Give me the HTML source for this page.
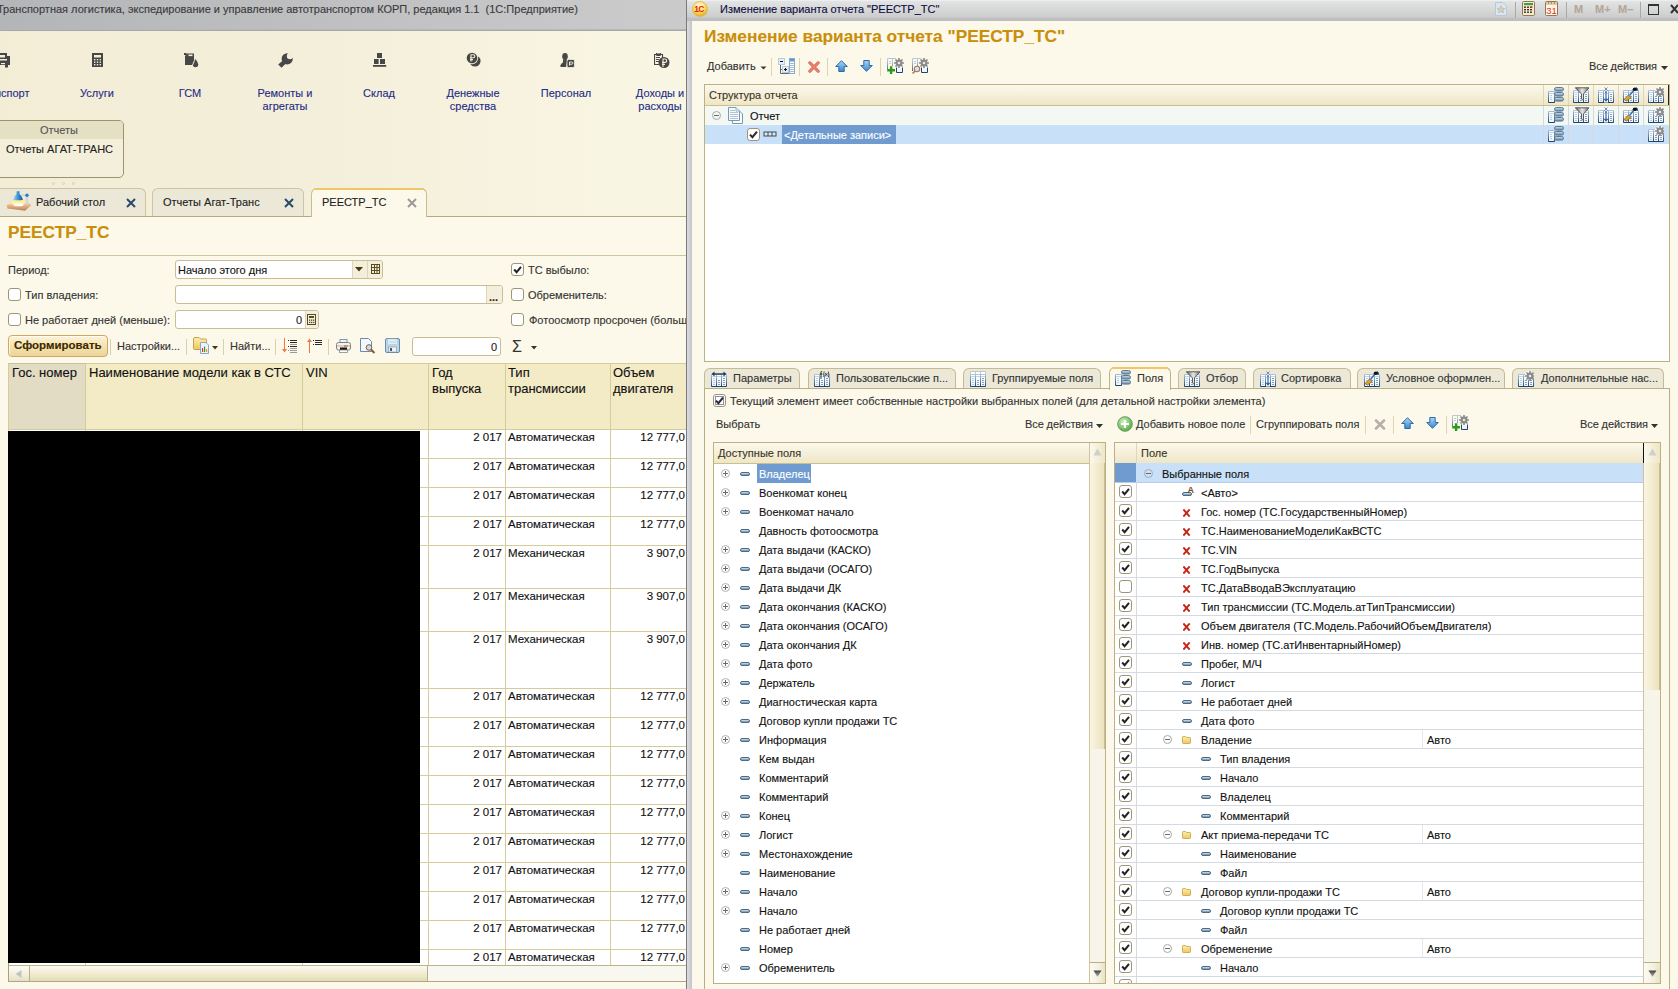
<!DOCTYPE html>
<html><head><meta charset="utf-8"><style>
html,body{margin:0;padding:0}
body{width:1678px;height:989px;position:relative;overflow:hidden;font-family:"Liberation Sans",sans-serif;font-size:11px;background:#fcf9ea}
.a{position:absolute}
.t{position:absolute;white-space:pre;-webkit-text-stroke:0.12px currentColor}
svg{display:block}
</style></head><body>
<svg width="0" height="0" style="position:absolute;left:0;top:0"><defs>
<linearGradient id="gdash" x1="0" y1="0" x2="0" y2="1"><stop offset="0" stop-color="#e4eef6"/><stop offset="0.5" stop-color="#a8c0d4"/><stop offset="1" stop-color="#4e6e8c"/></linearGradient>
<linearGradient id="gfold" x1="0" y1="0" x2="0" y2="1"><stop offset="0" stop-color="#fdf0b0"/><stop offset="1" stop-color="#ecc85c"/></linearGradient>
<linearGradient id="gbar" x1="0" y1="0" x2="0" y2="1"><stop offset="0" stop-color="#d8e6f0"/><stop offset="1" stop-color="#5d7f9d"/></linearGradient>
<linearGradient id="gblue" x1="0" y1="0" x2="0" y2="1"><stop offset="0" stop-color="#a8d8f8"/><stop offset="1" stop-color="#3c86c8"/></linearGradient>
<linearGradient id="gfun" x1="0" y1="0" x2="1" y2="0"><stop offset="0" stop-color="#5a5a5a"/><stop offset="0.5" stop-color="#e8e8e8"/><stop offset="1" stop-color="#707070"/></linearGradient>
<linearGradient id="gredx" x1="0" y1="0" x2="0" y2="1"><stop offset="0" stop-color="#f08070"/><stop offset="1" stop-color="#d04030"/></linearGradient>
<symbol id="dash" viewBox="0 0 10 4"><rect x="0.5" y="0.5" width="9" height="3" rx="1.5" fill="url(#gdash)" stroke="#4a6a86" stroke-width="1"/></symbol>
<symbol id="plusc" viewBox="0 0 10 10"><circle cx="4.5" cy="4.5" r="4" fill="#fff" stroke="#b0b0b0" stroke-width="1"/><path d="M2 4.5H7M4.5 2V7" stroke="#6a6a6a" stroke-width="1"/></symbol>
<symbol id="minusc" viewBox="0 0 10 10"><circle cx="4.5" cy="4.5" r="4" fill="none" stroke="#a8a8a8" stroke-width="1"/><path d="M2 4.5H7" stroke="#6a6a6a" stroke-width="1"/></symbol>
<symbol id="redx" viewBox="0 0 8 8"><path d="M1 1.2L6 6.8M6 1.2L1 6.8" stroke="#c42616" stroke-width="2" stroke-linecap="square"/></symbol>
<symbol id="folder" viewBox="0 0 9 8"><path d="M0.5 1.2Q0.5 0.5 1.2 0.5H3.6L4.4 1.5H7.8Q8.5 1.5 8.5 2.2V6.8Q8.5 7.5 7.8 7.5H1.2Q0.5 7.5 0.5 6.8Z" fill="url(#gfold)" stroke="#d2ac5a" stroke-width="1"/></symbol>
<symbol id="chk" viewBox="0 0 13 13"><rect x="0.5" y="0.5" width="12" height="12" rx="2.5" fill="#fff" stroke="#9d9475"/><path d="M3 6.6L5.4 9.2L10 3.6" stroke="#2a2a2a" stroke-width="2" fill="none"/></symbol>
<symbol id="chk0" viewBox="0 0 13 13"><rect x="0.5" y="0.5" width="12" height="12" rx="2.5" fill="#fff" stroke="#9d9475"/></symbol>
<linearGradient id="ggs" gradientUnits="userSpaceOnUse" x1="0" y1="3" x2="0" y2="16"><stop offset="0" stop-color="#b8c8dc"/><stop offset="0.6" stop-color="#5a7aa0"/><stop offset="1" stop-color="#1e3c64"/></linearGradient>
<linearGradient id="ggf" x1="0" y1="0" x2="0" y2="1"><stop offset="0" stop-color="#ffffff"/><stop offset="1" stop-color="#e4f6fc"/></linearGradient>
<symbol id="grid" viewBox="0 0 16 16">
 <path d="M0.5 15.5V3.5H15.5V15.5ZM5.5 3.5V15.5M10.5 3.5V15.5" fill="url(#ggf)" stroke="url(#ggs)" stroke-width="1"/>
 <path d="M1 5.5H5M6 5.5H10M11 5.5H15" stroke="#c4d4e6" stroke-width="1"/>
 <path d="M2.5 7h1v1h-1zM2.5 9h1v1h-1zM2.5 11h1v1h-1zM2.5 13h1v1h-1zM7 9h2v1H7zM7 11h2v1H7zM7 13h2v1H7zM12 7h2v1h-2zM12 9h2v1h-2zM12 11h2v1h-2zM12 13h2v1h-2z" fill="#9898b8"/>
</symbol>
<symbol id="ifields" viewBox="0 0 16 16">
 <path d="M0.5 15.5V4.5H6.5V15.5Z" fill="url(#ggf)" stroke="url(#ggs)"/><path d="M1 6.5H6" stroke="#c4d4e6"/>
 <path d="M2.5 8h1v1h-1zM2.5 10h1v1h-1zM2.5 12h1v1h-1z" fill="#9898b8"/>
 <rect x="6.5" y="0.5" width="9" height="3.6" rx="1.8" fill="url(#gbar)" stroke="#5a7a94"/>
 <rect x="6.5" y="5.5" width="9" height="3.6" rx="1.8" fill="url(#gbar)" stroke="#5a7a94"/>
 <rect x="6.5" y="10.5" width="9" height="3.6" rx="1.8" fill="url(#gbar)" stroke="#5a7a94"/>
</symbol>
<symbol id="ifilter" viewBox="0 0 16 16"><use href="#grid" width="16" height="16"/><path d="M2.3 0.8H16L10.5 7V13.5L8.5 12V7Z" fill="url(#gfun)" stroke="#505050" stroke-width="0.9" stroke-linejoin="round"/></symbol>
<symbol id="isort" viewBox="0 0 16 16"><use href="#grid" width="16" height="16"/><rect x="6" y="3.5" width="4" height="12" fill="#fff"/><path d="M8 5V13" stroke="#2a66aa" stroke-width="1.2"/><path d="M5.3 11.8L8 14.8L10.7 11.8Z" fill="#2a66aa"/><path d="M6.5 0.5L9.5 3.5M9.5 0.5L6.5 3.5M6.5 3.5L9.5 6.5M9.5 3.5L6.5 6.5" stroke="#4a7ab8" stroke-width="0.8"/></symbol>
<symbol id="ibrush" viewBox="0 0 16 16"><use href="#grid" width="16" height="16"/><path d="M1 12.5L5.5 8L8 10.5L3.5 14Z" fill="#d8a830" stroke="#8a6010" stroke-width="0.8"/><path d="M6.5 8.5L11 3" stroke="#3a78b8" stroke-width="1.6"/><ellipse cx="12" cy="2.3" rx="2.3" ry="1.8" fill="#111"/><path d="M13 0.5Q15.5 1 14.5 4" stroke="#2a6ab0" stroke-width="1" fill="none"/></symbol>
<symbol id="gear" viewBox="0 0 10 10"><g fill="#8a8a8a"><circle cx="5" cy="5" r="3.4"/><path d="M4.2 0h1.6v2h-1.6zM4.2 8h1.6v2h-1.6zM0 4.2h2v1.6h-2zM8 4.2h2v1.6h-2z"/><path d="M4.2 0h1.6v2h-1.6zM4.2 8h1.6v2h-1.6zM0 4.2h2v1.6h-2zM8 4.2h2v1.6h-2z" transform="rotate(45 5 5)"/></g><circle cx="5" cy="5" r="1.3" fill="#e8e8e8"/></symbol>
<symbol id="igear" viewBox="0 0 16 16"><use href="#grid" width="16" height="16"/><circle cx="11.5" cy="4.5" r="4.5" fill="#fff"/><use href="#gear" x="7" y="0" width="10" height="10"/></symbol>
<symbol id="iparams" viewBox="0 0 16 16"><use href="#grid" width="16" height="16"/><path d="M2 3H14" stroke="#1e3a5a" stroke-width="1.4"/><path d="M0.5 3L3.5 0.5V5.5ZM15.5 3L12.5 0.5V5.5Z" fill="#1e3a5a"/></symbol>
<symbol id="ifx" viewBox="0 0 16 16"><use href="#grid" width="16" height="16"/><path d="M7 1Q7 0 8.2 0.3M7 1V8M5.8 3H8.2" stroke="#222" stroke-width="0.9" fill="none"/><path d="M10.2 0.5Q9 3.5 10.2 6.5M14.3 0.5Q15.5 3.5 14.3 6.5" stroke="#333" stroke-width="0.8" fill="none"/><path d="M11 2L13.5 5M13.5 2L11 5" stroke="#333" stroke-width="0.8"/></symbol>
<symbol id="igrp" viewBox="0 0 16 16"><use href="#grid" width="16" height="16"/><path d="M0.5 0.5H15.5V3.5H0.5ZM5.5 0.5V3.5M10.5 0.5V3.5" fill="#fff" stroke="url(#ggs)"/></symbol>
<symbol id="ltri" viewBox="0 0 10 10"><path d="M7 1L2 5L7 9Z" fill="#c4c4c4"/></symbol>
</defs></svg>
<div class="a" style="left:0;top:0;width:686px;height:989px;overflow:hidden">
<div class="a" style="left:0px;top:0px;width:686px;height:29px;background:linear-gradient(90deg,#b4b5b8,#cbcbcc)"></div>
<div class="a" style="left:0px;top:29px;width:686px;height:1px;background:#b8b8ba"></div>
<div class="a" style="left:0px;top:30px;width:686px;height:1px;background:#a8a8aa"></div>
<div class="t" style="left:-3px;top:4px;font-size:11px;line-height:11px;color:#3a3a3a;">Транспортная логистика, экспедирование и управление автотранспортом КОРП, редакция 1.1  (1С:Предприятие)</div>
<div class="a" style="left:0px;top:31px;width:686px;height:185px;background:linear-gradient(90deg,#f3edd6,#f4efda 45%,#f9f6e4)"></div>
<div class="t" style="left:-57px;top:88px;font-size:11px;line-height:11px;color:#1f2c88;width:120px;text-align:center;">Транспорт</div>
<div class="t" style="left:37px;top:88px;font-size:11px;line-height:11px;color:#1f2c88;width:120px;text-align:center;">Услуги</div>
<div class="t" style="left:130px;top:88px;font-size:11px;line-height:11px;color:#1f2c88;width:120px;text-align:center;">ГСМ</div>
<div class="t" style="left:225px;top:88px;font-size:11px;line-height:11px;color:#1f2c88;width:120px;text-align:center;">Ремонты и</div>
<div class="t" style="left:225px;top:101px;font-size:11px;line-height:11px;color:#1f2c88;width:120px;text-align:center;">агрегаты</div>
<div class="t" style="left:319px;top:88px;font-size:11px;line-height:11px;color:#1f2c88;width:120px;text-align:center;">Склад</div>
<div class="t" style="left:413px;top:88px;font-size:11px;line-height:11px;color:#1f2c88;width:120px;text-align:center;">Денежные</div>
<div class="t" style="left:413px;top:101px;font-size:11px;line-height:11px;color:#1f2c88;width:120px;text-align:center;">средства</div>
<div class="t" style="left:506px;top:88px;font-size:11px;line-height:11px;color:#1f2c88;width:120px;text-align:center;">Персонал</div>
<div class="t" style="left:600px;top:88px;font-size:11px;line-height:11px;color:#1f2c88;width:120px;text-align:center;">Доходы и</div>
<div class="t" style="left:600px;top:101px;font-size:11px;line-height:11px;color:#1f2c88;width:120px;text-align:center;">расходы</div>
<div class="a" style="left:-6px;top:120px;width:130px;height:58px;border:1px solid #9c946e;border-radius:5px;background:#f4efda;box-sizing:border-box"></div>
<div class="a" style="left:-5px;top:121px;width:128px;height:18px;background:#e5e0c3;border-radius:0 4px 0 0"></div>
<div class="t" style="left:0px;top:125px;font-size:11px;line-height:11px;color:#555;width:118px;text-align:center;">Отчеты</div>
<div class="t" style="left:6px;top:144px;font-size:11px;line-height:11px;color:#222;">Отчеты АГАТ-ТРАНС</div>
<div class="a" style="left:51.5px;top:181.5px;width:3px;height:3px;border-radius:50%;border:1px solid #d4ceb4;box-sizing:border-box"></div>
<div class="a" style="left:61.5px;top:181.5px;width:3px;height:3px;border-radius:50%;border:1px solid #d4ceb4;box-sizing:border-box"></div>
<div class="a" style="left:71.5px;top:181.5px;width:3px;height:3px;border-radius:50%;border:1px solid #d4ceb4;box-sizing:border-box"></div>
<div class="a" style="left:-6px;top:188px;width:152px;height:28px;background:#ebe8d8;border:1px solid #cdc4a0;border-bottom:none;border-radius:6px 6px 0 0;box-sizing:border-box"></div>
<div class="t" style="left:36px;top:197px;font-size:11px;line-height:11px;color:#222;">Рабочий стол</div>
<div class="a" style="left:152px;top:188px;width:152px;height:28px;background:#ebe8d8;border:1px solid #cdc4a0;border-bottom:none;border-radius:6px 6px 0 0;box-sizing:border-box"></div>
<div class="t" style="left:163px;top:197px;font-size:11px;line-height:11px;color:#222;">Отчеты Агат-Транс</div>
<div class="a" style="left:0px;top:216px;width:686px;height:1px;background:#b4aa80"></div>
<div class="a" style="left:311px;top:188px;width:116px;height:29px;background:#fcf9eb;border:1px solid #c8bd8c;border-bottom:none;border-radius:6px 6px 0 0;box-sizing:border-box"></div>
<div class="a" style="left:314px;top:188px;width:110px;height:2px;background:#f3c46a;border-radius:2px"></div>
<div class="t" style="left:322px;top:197px;font-size:11px;line-height:11px;color:#222;">РЕЕСТР_ТС</div>
<div class="a" style="left:312px;top:216px;width:114px;height:1px;background:#fcf9eb"></div>
<svg class="a" style="left:126px;top:198px;" width="10" height="10" viewBox="0 0 10 10"><path d="M1 1L9 9M9 1L1 9" stroke="#284a6b" stroke-width="2"/></svg>
<svg class="a" style="left:284px;top:198px;" width="10" height="10" viewBox="0 0 10 10"><path d="M1 1L9 9M9 1L1 9" stroke="#284a6b" stroke-width="2"/></svg>
<svg class="a" style="left:407px;top:198px;" width="10" height="10" viewBox="0 0 10 10"><path d="M1 1L9 9M9 1L1 9" stroke="#9a9a9a" stroke-width="2"/></svg>
<div class="a" style="left:0px;top:217px;width:686px;height:772px;background:#fcf9ea"></div>
<div class="t" style="left:8px;top:224px;font-size:17.3px;line-height:17.3px;color:#c98e0a;font-weight:700;">РЕЕСТР_ТС</div>
<div class="a" style="left:8px;top:255px;width:678px;height:1px;background:#cfc69e"></div>
<div class="t" style="left:8px;top:265px;font-size:11px;line-height:11px;color:#333;">Период:</div>
<div class="a" style="left:8px;top:288px;width:13px;height:13px;border:1px solid #9f9677;border-radius:3px;background:#fff;box-sizing:border-box"></div>
<div class="t" style="left:25px;top:290px;font-size:11px;line-height:11px;color:#333;">Тип владения:</div>
<div class="a" style="left:8px;top:313px;width:13px;height:13px;border:1px solid #9f9677;border-radius:3px;background:#fff;box-sizing:border-box"></div>
<div class="t" style="left:25px;top:315px;font-size:11px;line-height:11px;color:#333;">Не работает дней (меньше):</div>
<div class="a" style="left:175px;top:260px;width:208px;height:19px;border:1px solid #c8bd94;border-radius:3px;background:#fff;box-sizing:border-box"></div>
<div class="t" style="left:178px;top:265px;font-size:11px;line-height:11px;color:#111;">Начало этого дня</div>
<div class="a" style="left:352px;top:261px;width:1px;height:17px;background:#ddd5b5"></div>
<div class="a" style="left:353px;top:261px;width:14px;height:17px;background:#f4efdc"></div>
<div class="a" style="left:367px;top:261px;width:1px;height:17px;background:#ddd5b5"></div>
<div class="a" style="left:368px;top:261px;width:14px;height:17px;background:#f4efdc;border-radius:0 2px 2px 0"></div>
<div class="a" style="left:175px;top:285px;width:328px;height:19px;border:1px solid #c8bd94;border-radius:3px;background:#fff;box-sizing:border-box"></div>
<div class="a" style="left:486px;top:286px;width:1px;height:17px;background:#ddd5b5"></div>
<div class="a" style="left:487px;top:286px;width:15px;height:17px;background:#f4efdc;border-radius:0 2px 2px 0"></div>
<div class="t" style="left:489px;top:292px;font-size:11px;line-height:11px;color:#222;font-weight:700;">...</div>
<div class="a" style="left:175px;top:310px;width:144px;height:19px;border:1px solid #c8bd94;border-radius:3px;background:#fff;box-sizing:border-box"></div>
<div class="t" style="left:175px;top:315px;font-size:11px;line-height:11px;color:#222;width:127px;text-align:right;">0</div>
<div class="a" style="left:305px;top:311px;width:1px;height:17px;background:#ddd5b5"></div>
<div class="a" style="left:306px;top:311px;width:12px;height:17px;background:#f4efdc;border-radius:0 2px 2px 0"></div>
<div class="a" style="left:511px;top:263px;width:13px;height:13px;border:1px solid #9f9677;border-radius:3px;background:#fff;box-sizing:border-box"></div>
<svg class="a" style="left:513px;top:265px;" width="9" height="9" viewBox="0 0 9 9"><path d="M1.2 4.5L3.6 7.2L8 1.8" stroke="#222" stroke-width="2" fill="none"/></svg>
<div class="t" style="left:528px;top:265px;font-size:11px;line-height:11px;color:#333;">ТС выбыло:</div>
<div class="a" style="left:511px;top:288px;width:13px;height:13px;border:1px solid #9f9677;border-radius:3px;background:#fff;box-sizing:border-box"></div>
<div class="t" style="left:528px;top:290px;font-size:11px;line-height:11px;color:#333;">Обременитель:</div>
<div class="a" style="left:511px;top:313px;width:13px;height:13px;border:1px solid #9f9677;border-radius:3px;background:#fff;box-sizing:border-box"></div>
<div class="t" style="left:529px;top:315px;font-size:11px;line-height:11px;color:#333;">Фотоосмотр просрочен (больше):</div>
<div class="a" style="left:8px;top:335px;width:100px;height:22px;border:1px solid #d0a860;border-radius:4px;background:linear-gradient(180deg,#fdf3d8,#f6e2b0 50%,#ecd49a);box-shadow:inset 0 1px 0 #fffcf0,inset 1px 0 0 #fff6e0;box-sizing:border-box"></div>
<div class="t" style="left:14px;top:340px;font-size:11.5px;line-height:11.5px;color:#3a2a00;font-weight:700;">Сформировать</div>
<div class="a" style="left:110px;top:339px;width:1px;height:16px;background:#d8d0b0"></div>
<div class="a" style="left:186px;top:339px;width:1px;height:16px;background:#d8d0b0"></div>
<div class="a" style="left:223px;top:339px;width:1px;height:16px;background:#d8d0b0"></div>
<div class="a" style="left:275px;top:339px;width:1px;height:16px;background:#d8d0b0"></div>
<div class="a" style="left:328px;top:339px;width:1px;height:16px;background:#d8d0b0"></div>
<div class="t" style="left:117px;top:341px;font-size:11px;line-height:11px;color:#333;">Настройки...</div>
<div class="t" style="left:230px;top:341px;font-size:11px;line-height:11px;color:#333;">Найти...</div>
<div class="a" style="left:412px;top:337px;width:89px;height:19px;border:1px solid #c8bd94;border-radius:3px;background:#fff;box-sizing:border-box"></div>
<div class="t" style="left:412px;top:342px;font-size:11px;line-height:11px;color:#222;width:85px;text-align:right;">0</div>
<div class="t" style="left:512px;top:339px;font-size:16px;line-height:16px;color:#333;">Σ</div>
<div class="a" style="left:8px;top:363px;width:678px;height:67px;background:#f3ebc6"></div>
<div class="a" style="left:8px;top:363px;width:678px;height:1px;background:#d6cc9a"></div>
<div class="a" style="left:8px;top:429px;width:678px;height:1px;background:#d6cc9a"></div>
<div class="a" style="left:8px;top:363px;width:78px;height:67px;background:#e2dcc5;border:1px solid #c9c0a0;box-sizing:border-box"></div>
<div class="a" style="left:85px;top:363px;width:1px;height:602px;background:#d6cc9a"></div>
<div class="a" style="left:302px;top:363px;width:1px;height:602px;background:#d6cc9a"></div>
<div class="a" style="left:428px;top:363px;width:1px;height:602px;background:#d6cc9a"></div>
<div class="a" style="left:505px;top:363px;width:1px;height:602px;background:#d6cc9a"></div>
<div class="a" style="left:610px;top:363px;width:1px;height:602px;background:#d6cc9a"></div>
<div class="a" style="left:8px;top:363px;width:1px;height:602px;background:#d6cc9a"></div>
<div class="t" style="left:12px;top:366px;font-size:13px;line-height:13px;color:#111;">Гос. номер</div>
<div class="t" style="left:89px;top:366px;font-size:13px;line-height:13px;color:#111;">Наименование модели как в СТС</div>
<div class="t" style="left:306px;top:366px;font-size:13px;line-height:13px;color:#111;">VIN</div>
<div class="t" style="left:432px;top:366px;font-size:13px;line-height:13px;color:#111;">Год</div>
<div class="t" style="left:432px;top:382px;font-size:13px;line-height:13px;color:#111;">выпуска</div>
<div class="t" style="left:508px;top:366px;font-size:13px;line-height:13px;color:#111;">Тип</div>
<div class="t" style="left:508px;top:382px;font-size:13px;line-height:13px;color:#111;">трансмиссии</div>
<div class="t" style="left:613px;top:366px;font-size:13px;line-height:13px;color:#111;">Объем</div>
<div class="t" style="left:613px;top:382px;font-size:13px;line-height:13px;color:#111;">двигателя</div>
<div class="a" style="left:9px;top:430px;width:677px;height:535px;background:#fff"></div>
<div class="a" style="left:85px;top:430px;width:1px;height:535px;background:#d6cc9a"></div>
<div class="a" style="left:302px;top:430px;width:1px;height:535px;background:#d6cc9a"></div>
<div class="a" style="left:428px;top:430px;width:1px;height:535px;background:#d6cc9a"></div>
<div class="a" style="left:505px;top:430px;width:1px;height:535px;background:#d6cc9a"></div>
<div class="a" style="left:610px;top:430px;width:1px;height:535px;background:#d6cc9a"></div>
<div class="a" style="left:8px;top:429px;width:678px;height:1px;background:#d6cc9a"></div>
<div class="t" style="left:428px;top:432px;font-size:11.5px;line-height:11.5px;color:#111;width:74px;text-align:right;">2 017</div>
<div class="t" style="left:508px;top:432px;font-size:11.5px;line-height:11.5px;color:#111;">Автоматическая</div>
<div class="t" style="left:610px;top:432px;font-size:11.5px;line-height:11.5px;color:#111;width:75px;text-align:right;">12 777,0</div>
<div class="a" style="left:8px;top:458px;width:678px;height:1px;background:#d6cc9a"></div>
<div class="t" style="left:428px;top:461px;font-size:11.5px;line-height:11.5px;color:#111;width:74px;text-align:right;">2 017</div>
<div class="t" style="left:508px;top:461px;font-size:11.5px;line-height:11.5px;color:#111;">Автоматическая</div>
<div class="t" style="left:610px;top:461px;font-size:11.5px;line-height:11.5px;color:#111;width:75px;text-align:right;">12 777,0</div>
<div class="a" style="left:8px;top:487px;width:678px;height:1px;background:#d6cc9a"></div>
<div class="t" style="left:428px;top:490px;font-size:11.5px;line-height:11.5px;color:#111;width:74px;text-align:right;">2 017</div>
<div class="t" style="left:508px;top:490px;font-size:11.5px;line-height:11.5px;color:#111;">Автоматическая</div>
<div class="t" style="left:610px;top:490px;font-size:11.5px;line-height:11.5px;color:#111;width:75px;text-align:right;">12 777,0</div>
<div class="a" style="left:8px;top:516px;width:678px;height:1px;background:#d6cc9a"></div>
<div class="t" style="left:428px;top:519px;font-size:11.5px;line-height:11.5px;color:#111;width:74px;text-align:right;">2 017</div>
<div class="t" style="left:508px;top:519px;font-size:11.5px;line-height:11.5px;color:#111;">Автоматическая</div>
<div class="t" style="left:610px;top:519px;font-size:11.5px;line-height:11.5px;color:#111;width:75px;text-align:right;">12 777,0</div>
<div class="a" style="left:8px;top:545px;width:678px;height:1px;background:#d6cc9a"></div>
<div class="t" style="left:428px;top:548px;font-size:11.5px;line-height:11.5px;color:#111;width:74px;text-align:right;">2 017</div>
<div class="t" style="left:508px;top:548px;font-size:11.5px;line-height:11.5px;color:#111;">Механическая</div>
<div class="t" style="left:610px;top:548px;font-size:11.5px;line-height:11.5px;color:#111;width:75px;text-align:right;">3 907,0</div>
<div class="a" style="left:8px;top:588px;width:678px;height:1px;background:#d6cc9a"></div>
<div class="t" style="left:428px;top:591px;font-size:11.5px;line-height:11.5px;color:#111;width:74px;text-align:right;">2 017</div>
<div class="t" style="left:508px;top:591px;font-size:11.5px;line-height:11.5px;color:#111;">Механическая</div>
<div class="t" style="left:610px;top:591px;font-size:11.5px;line-height:11.5px;color:#111;width:75px;text-align:right;">3 907,0</div>
<div class="a" style="left:8px;top:631px;width:678px;height:1px;background:#d6cc9a"></div>
<div class="t" style="left:428px;top:634px;font-size:11.5px;line-height:11.5px;color:#111;width:74px;text-align:right;">2 017</div>
<div class="t" style="left:508px;top:634px;font-size:11.5px;line-height:11.5px;color:#111;">Механическая</div>
<div class="t" style="left:610px;top:634px;font-size:11.5px;line-height:11.5px;color:#111;width:75px;text-align:right;">3 907,0</div>
<div class="a" style="left:8px;top:688px;width:678px;height:1px;background:#d6cc9a"></div>
<div class="t" style="left:428px;top:691px;font-size:11.5px;line-height:11.5px;color:#111;width:74px;text-align:right;">2 017</div>
<div class="t" style="left:508px;top:691px;font-size:11.5px;line-height:11.5px;color:#111;">Автоматическая</div>
<div class="t" style="left:610px;top:691px;font-size:11.5px;line-height:11.5px;color:#111;width:75px;text-align:right;">12 777,0</div>
<div class="a" style="left:8px;top:717px;width:678px;height:1px;background:#d6cc9a"></div>
<div class="t" style="left:428px;top:720px;font-size:11.5px;line-height:11.5px;color:#111;width:74px;text-align:right;">2 017</div>
<div class="t" style="left:508px;top:720px;font-size:11.5px;line-height:11.5px;color:#111;">Автоматическая</div>
<div class="t" style="left:610px;top:720px;font-size:11.5px;line-height:11.5px;color:#111;width:75px;text-align:right;">12 777,0</div>
<div class="a" style="left:8px;top:746px;width:678px;height:1px;background:#d6cc9a"></div>
<div class="t" style="left:428px;top:749px;font-size:11.5px;line-height:11.5px;color:#111;width:74px;text-align:right;">2 017</div>
<div class="t" style="left:508px;top:749px;font-size:11.5px;line-height:11.5px;color:#111;">Автоматическая</div>
<div class="t" style="left:610px;top:749px;font-size:11.5px;line-height:11.5px;color:#111;width:75px;text-align:right;">12 777,0</div>
<div class="a" style="left:8px;top:775px;width:678px;height:1px;background:#d6cc9a"></div>
<div class="t" style="left:428px;top:778px;font-size:11.5px;line-height:11.5px;color:#111;width:74px;text-align:right;">2 017</div>
<div class="t" style="left:508px;top:778px;font-size:11.5px;line-height:11.5px;color:#111;">Автоматическая</div>
<div class="t" style="left:610px;top:778px;font-size:11.5px;line-height:11.5px;color:#111;width:75px;text-align:right;">12 777,0</div>
<div class="a" style="left:8px;top:804px;width:678px;height:1px;background:#d6cc9a"></div>
<div class="t" style="left:428px;top:807px;font-size:11.5px;line-height:11.5px;color:#111;width:74px;text-align:right;">2 017</div>
<div class="t" style="left:508px;top:807px;font-size:11.5px;line-height:11.5px;color:#111;">Автоматическая</div>
<div class="t" style="left:610px;top:807px;font-size:11.5px;line-height:11.5px;color:#111;width:75px;text-align:right;">12 777,0</div>
<div class="a" style="left:8px;top:833px;width:678px;height:1px;background:#d6cc9a"></div>
<div class="t" style="left:428px;top:836px;font-size:11.5px;line-height:11.5px;color:#111;width:74px;text-align:right;">2 017</div>
<div class="t" style="left:508px;top:836px;font-size:11.5px;line-height:11.5px;color:#111;">Автоматическая</div>
<div class="t" style="left:610px;top:836px;font-size:11.5px;line-height:11.5px;color:#111;width:75px;text-align:right;">12 777,0</div>
<div class="a" style="left:8px;top:862px;width:678px;height:1px;background:#d6cc9a"></div>
<div class="t" style="left:428px;top:865px;font-size:11.5px;line-height:11.5px;color:#111;width:74px;text-align:right;">2 017</div>
<div class="t" style="left:508px;top:865px;font-size:11.5px;line-height:11.5px;color:#111;">Автоматическая</div>
<div class="t" style="left:610px;top:865px;font-size:11.5px;line-height:11.5px;color:#111;width:75px;text-align:right;">12 777,0</div>
<div class="a" style="left:8px;top:891px;width:678px;height:1px;background:#d6cc9a"></div>
<div class="t" style="left:428px;top:894px;font-size:11.5px;line-height:11.5px;color:#111;width:74px;text-align:right;">2 017</div>
<div class="t" style="left:508px;top:894px;font-size:11.5px;line-height:11.5px;color:#111;">Автоматическая</div>
<div class="t" style="left:610px;top:894px;font-size:11.5px;line-height:11.5px;color:#111;width:75px;text-align:right;">12 777,0</div>
<div class="a" style="left:8px;top:920px;width:678px;height:1px;background:#d6cc9a"></div>
<div class="t" style="left:428px;top:923px;font-size:11.5px;line-height:11.5px;color:#111;width:74px;text-align:right;">2 017</div>
<div class="t" style="left:508px;top:923px;font-size:11.5px;line-height:11.5px;color:#111;">Автоматическая</div>
<div class="t" style="left:610px;top:923px;font-size:11.5px;line-height:11.5px;color:#111;width:75px;text-align:right;">12 777,0</div>
<div class="a" style="left:8px;top:949px;width:678px;height:1px;background:#d6cc9a"></div>
<div class="t" style="left:428px;top:952px;font-size:11.5px;line-height:11.5px;color:#111;width:74px;text-align:right;">2 017</div>
<div class="t" style="left:508px;top:952px;font-size:11.5px;line-height:11.5px;color:#111;">Автоматическая</div>
<div class="t" style="left:610px;top:952px;font-size:11.5px;line-height:11.5px;color:#111;width:75px;text-align:right;">12 777,0</div>
<div class="a" style="left:8px;top:431px;width:412px;height:532px;background:#000"></div>
<div class="a" style="left:8px;top:966px;width:678px;height:15px;background:#f8f7f0"></div>
<div class="a" style="left:8px;top:981px;width:678px;height:1px;background:#b0a680"></div>
<div class="a" style="left:9px;top:966px;width:20px;height:15px;background:linear-gradient(180deg,#fdfcf6,#f2eedc 60%,#e6e0c4)"></div>
<div class="a" style="left:29px;top:966px;width:1px;height:15px;background:#b8ae88"></div>
<div class="a" style="left:30px;top:966px;width:397px;height:15px;background:linear-gradient(180deg,#fcfaf0,#f0e9cc 60%,#e2dbb8)"></div>
<div class="a" style="left:427px;top:966px;width:1px;height:15px;background:#b8ae88"></div>
<div class="a" style="left:8px;top:965px;width:678px;height:1px;background:#bdb48e"></div>
<div class="a" style="left:8px;top:963px;width:1px;height:19px;background:#aaa07a"></div>
<svg class="a" style="left:14px;top:969px;" width="9" height="10" viewBox="0 0 9 10"><path d="M7.5 1L1.5 5L7.5 9Z" fill="#c4c4c0"/></svg>
</div>
<div class="a" style="left:686px;top:0px;width:1px;height:989px;background:#7a7a7a"></div>
<div class="a" style="left:687px;top:0px;width:5px;height:989px;background:linear-gradient(90deg,#dcdde0,#c4c5c8)"></div>
<div class="a" style="left:687px;top:0px;width:991px;height:21px;background:linear-gradient(180deg,#f2f3f4 0px,#e2e3e3 1.5px,#cdcdcd 17px,#c0c0c2 18.5px,#bcbdbf 21px)"></div>
<div class="a" style="left:692px;top:21px;width:986px;height:968px;background:#fcf9ea"></div>
<div class="t" style="left:720px;top:4px;font-size:11px;line-height:11px;color:#0c0c40;">Изменение варианта отчета &quot;РЕЕСТР_ТС&quot;</div>
<div class="t" style="left:704px;top:28px;font-size:17.3px;line-height:17.3px;color:#c98e0a;font-weight:700;">Изменение варианта отчета &quot;РЕЕСТР_ТС&quot;</div>
<div class="t" style="left:707px;top:61px;font-size:11px;line-height:11px;color:#333;">Добавить</div>
<svg class="a" style="left:760px;top:66px;" width="7" height="4" viewBox="0 0 7 4"><path d="M0.5 0.5H6.5L3.5 3.5Z" fill="#3a3a2a"/></svg>
<div class="a" style="left:771px;top:58px;width:1px;height:18px;background:#ddd4b4"></div>
<div class="a" style="left:799px;top:58px;width:1px;height:18px;background:#ddd4b4"></div>
<div class="a" style="left:827px;top:58px;width:1px;height:18px;background:#ddd4b4"></div>
<div class="a" style="left:880px;top:58px;width:1px;height:18px;background:#ddd4b4"></div>
<div class="t" style="left:1589px;top:61px;font-size:11px;line-height:11px;color:#333;letter-spacing:-0.1px">Все действия</div>
<svg class="a" style="left:1661px;top:66px;" width="7" height="4" viewBox="0 0 7 4"><path d="M0 0H7L3.5 4Z" fill="#333"/></svg>
<div class="a" style="left:704px;top:84px;width:966px;height:278px;border:1px solid #bdb184;background:#fff;box-sizing:border-box"></div>
<div class="a" style="left:705px;top:85px;width:964px;height:20px;background:linear-gradient(180deg,#fbf9ee,#efe6c6)"></div>
<div class="a" style="left:705px;top:105px;width:964px;height:1px;background:#cbbf90"></div>
<div class="t" style="left:709px;top:90px;font-size:11px;line-height:11px;color:#3a3520;">Структура отчета</div>
<div class="a" style="left:705px;top:106px;width:964px;height:19px;background:#f3f8f2"></div>
<div class="a" style="left:705px;top:125px;width:964px;height:19px;background:#c8e0f8"></div>
<div class="a" style="left:1543px;top:85px;width:1px;height:20px;background:#ddd6bb"></div>
<div class="a" style="left:1543px;top:106px;width:1px;height:38px;background:#d3d9e0"></div>
<div class="a" style="left:1568px;top:85px;width:1px;height:20px;background:#ddd6bb"></div>
<div class="a" style="left:1568px;top:106px;width:1px;height:38px;background:#d3d9e0"></div>
<div class="a" style="left:1593px;top:85px;width:1px;height:20px;background:#ddd6bb"></div>
<div class="a" style="left:1593px;top:106px;width:1px;height:38px;background:#d3d9e0"></div>
<div class="a" style="left:1618px;top:85px;width:1px;height:20px;background:#ddd6bb"></div>
<div class="a" style="left:1618px;top:106px;width:1px;height:38px;background:#d3d9e0"></div>
<div class="a" style="left:1643px;top:85px;width:1px;height:20px;background:#ddd6bb"></div>
<div class="a" style="left:1643px;top:106px;width:1px;height:38px;background:#d3d9e0"></div>
<div class="a" style="left:1668px;top:85px;width:1px;height:20px;background:#222"></div>
<div class="t" style="left:750px;top:111px;font-size:11px;line-height:11px;color:#111;">Отчет</div>
<div class="a" style="left:782px;top:125px;width:114px;height:19px;background:#6f9bd1"></div>
<div class="t" style="left:784px;top:130px;font-size:11px;line-height:11px;color:#fff;">&lt;Детальные записи&gt;</div>
<div class="a" style="left:704px;top:388px;width:966px;height:601px;border:1px solid #b9ae84;border-bottom:none;background:#fcf9ea;box-sizing:border-box"></div>
<div class="a" style="left:704px;top:368px;width:96px;height:20px;background:#ebe8d8;border:1px solid #c4ba94;border-bottom:none;border-radius:6px 6px 0 0;box-sizing:border-box"></div>
<div class="t" style="left:733px;top:373px;font-size:11px;line-height:11px;color:#333;">Параметры</div>
<div class="a" style="left:808px;top:368px;width:148px;height:20px;background:#ebe8d8;border:1px solid #c4ba94;border-bottom:none;border-radius:6px 6px 0 0;box-sizing:border-box"></div>
<div class="t" style="left:836px;top:373px;font-size:11px;line-height:11px;color:#333;">Пользовательские п...</div>
<div class="a" style="left:963px;top:368px;width:138px;height:20px;background:#ebe8d8;border:1px solid #c4ba94;border-bottom:none;border-radius:6px 6px 0 0;box-sizing:border-box"></div>
<div class="t" style="left:992px;top:373px;font-size:11px;line-height:11px;color:#333;">Группируемые поля</div>
<div class="a" style="left:1109px;top:367px;width:62px;height:23px;background:#fcf9eb;border:1px solid #bdb286;border-bottom:none;border-radius:6px 6px 0 0;box-sizing:border-box"></div>
<div class="a" style="left:1112px;top:367px;width:56px;height:2px;background:#f3c46a;border-radius:2px"></div>
<div class="t" style="left:1137px;top:373px;font-size:11px;line-height:11px;color:#333;">Поля</div>
<div class="a" style="left:1178px;top:368px;width:68px;height:20px;background:#ebe8d8;border:1px solid #c4ba94;border-bottom:none;border-radius:6px 6px 0 0;box-sizing:border-box"></div>
<div class="t" style="left:1206px;top:373px;font-size:11px;line-height:11px;color:#333;">Отбор</div>
<div class="a" style="left:1253px;top:368px;width:98px;height:20px;background:#ebe8d8;border:1px solid #c4ba94;border-bottom:none;border-radius:6px 6px 0 0;box-sizing:border-box"></div>
<div class="t" style="left:1281px;top:373px;font-size:11px;line-height:11px;color:#333;">Сортировка</div>
<div class="a" style="left:1357px;top:368px;width:148px;height:20px;background:#ebe8d8;border:1px solid #c4ba94;border-bottom:none;border-radius:6px 6px 0 0;box-sizing:border-box"></div>
<div class="t" style="left:1386px;top:373px;font-size:11px;line-height:11px;color:#333;">Условное оформлен...</div>
<div class="a" style="left:1512px;top:368px;width:152px;height:20px;background:#ebe8d8;border:1px solid #c4ba94;border-bottom:none;border-radius:6px 6px 0 0;box-sizing:border-box"></div>
<div class="t" style="left:1541px;top:373px;font-size:11px;line-height:11px;color:#333;">Дополнительные нас...</div>
<svg class="a" style="left:713px;top:394px;" width="13" height="13" viewBox="0 0 13 13"><rect x="0.5" y="0.5" width="12" height="12" rx="2.5" fill="#fff" stroke="#9d9475"/><rect x="2.5" y="2.5" width="8" height="8" fill="none" stroke="#1a1a60" stroke-width="1" stroke-dasharray="1 1"/><path d="M3 6.6L5.4 9.2L10 3.6" stroke="#2a2a2a" stroke-width="2" fill="none"/></svg>
<div class="t" style="left:730px;top:396px;font-size:11px;line-height:11px;color:#333;">Текущий элемент имеет собственные настройки выбранных полей (для детальной настройки элемента)</div>
<div class="t" style="left:716px;top:419px;font-size:11px;line-height:11px;color:#333;">Выбрать</div>
<div class="t" style="left:1025px;top:419px;font-size:11px;line-height:11px;color:#333;letter-spacing:-0.1px">Все действия</div>
<svg class="a" style="left:1096px;top:424px;" width="7" height="4" viewBox="0 0 7 4"><path d="M0 0H7L3.5 4Z" fill="#333"/></svg>
<div class="t" style="left:1136px;top:419px;font-size:11px;line-height:11px;color:#333;">Добавить новое поле</div>
<div class="a" style="left:1250px;top:416px;width:1px;height:18px;background:#ddd4b4"></div>
<div class="a" style="left:1365px;top:416px;width:1px;height:18px;background:#ddd4b4"></div>
<div class="a" style="left:1393px;top:416px;width:1px;height:18px;background:#ddd4b4"></div>
<div class="a" style="left:1446px;top:416px;width:1px;height:18px;background:#ddd4b4"></div>
<div class="t" style="left:1256px;top:419px;font-size:11px;line-height:11px;color:#333;">Сгруппировать поля</div>
<div class="t" style="left:1580px;top:419px;font-size:11px;line-height:11px;color:#333;letter-spacing:-0.1px">Все действия</div>
<svg class="a" style="left:1651px;top:424px;" width="7" height="4" viewBox="0 0 7 4"><path d="M0 0H7L3.5 4Z" fill="#333"/></svg>
<div class="a" style="left:713px;top:442px;width:393px;height:542px;border:1px solid #bdb184;background:#fff;box-sizing:border-box"></div>
<div class="a" style="left:714px;top:443px;width:376px;height:20px;background:linear-gradient(180deg,#fbf9ee,#efe6c6)"></div>
<div class="a" style="left:714px;top:463px;width:376px;height:1px;background:#cbbf90"></div>
<div class="t" style="left:718px;top:448px;font-size:11px;line-height:11px;color:#3a3520;">Доступные поля</div>
<div class="a" style="left:1089px;top:443px;width:1px;height:540px;background:#cfc49a"></div>
<div class="a" style="left:1090px;top:443px;width:15px;height:20px;background:linear-gradient(90deg,#fbf9ee,#efe6c6)"></div>
<div class="a" style="left:1090px;top:463px;width:15px;height:286px;background:linear-gradient(90deg,#faf6e6,#ede2bc);border-right:1px solid #c8bd94;box-sizing:border-box"></div>
<div class="a" style="left:1090px;top:749px;width:15px;height:234px;background:#f7f4ea"></div>
<div class="a" style="left:757px;top:464px;width:54px;height:19px;background:#6f9bd1"></div>
<div class="t" style="left:759px;top:469px;font-size:11px;line-height:11px;color:#fff;">Владелец</div>
<div class="t" style="left:759px;top:488px;font-size:11px;line-height:11px;color:#111;">Военкомат конец</div>
<div class="t" style="left:759px;top:507px;font-size:11px;line-height:11px;color:#111;">Военкомат начало</div>
<div class="t" style="left:759px;top:526px;font-size:11px;line-height:11px;color:#111;">Давность фотоосмотра</div>
<div class="t" style="left:759px;top:545px;font-size:11px;line-height:11px;color:#111;">Дата выдачи (КАСКО)</div>
<div class="t" style="left:759px;top:564px;font-size:11px;line-height:11px;color:#111;">Дата выдачи (ОСАГО)</div>
<div class="t" style="left:759px;top:583px;font-size:11px;line-height:11px;color:#111;">Дата выдачи ДК</div>
<div class="t" style="left:759px;top:602px;font-size:11px;line-height:11px;color:#111;">Дата окончания (КАСКО)</div>
<div class="t" style="left:759px;top:621px;font-size:11px;line-height:11px;color:#111;">Дата окончания (ОСАГО)</div>
<div class="t" style="left:759px;top:640px;font-size:11px;line-height:11px;color:#111;">Дата окончания ДК</div>
<div class="t" style="left:759px;top:659px;font-size:11px;line-height:11px;color:#111;">Дата фото</div>
<div class="t" style="left:759px;top:678px;font-size:11px;line-height:11px;color:#111;">Держатель</div>
<div class="t" style="left:759px;top:697px;font-size:11px;line-height:11px;color:#111;">Диагностическая карта</div>
<div class="t" style="left:759px;top:716px;font-size:11px;line-height:11px;color:#111;">Договор купли продажи ТС</div>
<div class="t" style="left:759px;top:735px;font-size:11px;line-height:11px;color:#111;">Информация</div>
<div class="t" style="left:759px;top:754px;font-size:11px;line-height:11px;color:#111;">Кем выдан</div>
<div class="t" style="left:759px;top:773px;font-size:11px;line-height:11px;color:#111;">Комментарий</div>
<div class="t" style="left:759px;top:792px;font-size:11px;line-height:11px;color:#111;">Комментарий</div>
<div class="t" style="left:759px;top:811px;font-size:11px;line-height:11px;color:#111;">Конец</div>
<div class="t" style="left:759px;top:830px;font-size:11px;line-height:11px;color:#111;">Логист</div>
<div class="t" style="left:759px;top:849px;font-size:11px;line-height:11px;color:#111;">Местонахождение</div>
<div class="t" style="left:759px;top:868px;font-size:11px;line-height:11px;color:#111;">Наименование</div>
<div class="t" style="left:759px;top:887px;font-size:11px;line-height:11px;color:#111;">Начало</div>
<div class="t" style="left:759px;top:906px;font-size:11px;line-height:11px;color:#111;">Начало</div>
<div class="t" style="left:759px;top:925px;font-size:11px;line-height:11px;color:#111;">Не работает дней</div>
<div class="t" style="left:759px;top:944px;font-size:11px;line-height:11px;color:#111;">Номер</div>
<div class="t" style="left:759px;top:963px;font-size:11px;line-height:11px;color:#111;">Обременитель</div>
<div class="a" style="left:1114px;top:442px;width:547px;height:542px;border:1px solid #bdb184;background:#fff;box-sizing:border-box"></div>
<div class="a" style="left:1115px;top:443px;width:529px;height:20px;background:linear-gradient(180deg,#fbf9ee,#efe6c6)"></div>
<div class="a" style="left:1115px;top:463px;width:529px;height:1px;background:#cbbf90"></div>
<div class="a" style="left:1136px;top:443px;width:1px;height:20px;background:#ddd6bb"></div>
<div class="a" style="left:1643px;top:443px;width:1px;height:20px;background:#111"></div>
<div class="t" style="left:1141px;top:448px;font-size:11px;line-height:11px;color:#3a3520;">Поле</div>
<div class="a" style="left:1644px;top:443px;width:16px;height:20px;background:linear-gradient(90deg,#fbf9ee,#efe6c6)"></div>
<div class="a" style="left:1644px;top:463px;width:16px;height:227px;background:linear-gradient(90deg,#faf6e6,#ede2bc);border-right:1px solid #c8bd94;box-sizing:border-box"></div>
<div class="a" style="left:1644px;top:690px;width:16px;height:293px;background:#f7f4ea"></div>
<div class="a" style="left:1643px;top:463px;width:1px;height:520px;background:#cfc49a"></div>
<div class="a" style="left:1115px;top:463px;width:528px;height:19px;background:#c8e0f8"></div>
<div class="a" style="left:1115px;top:463px;width:21px;height:19px;background:#6f9bd1"></div>
<div class="a" style="left:1115px;top:464px;width:528px;height:519px;overflow:hidden">
<div class="a" style="left:0px;top:18px;width:528px;height:1px;background:#d3dae2"></div>
<div class="a" style="left:0px;top:18px;width:528px;height:1px;background:#b5cde6"></div>
<div class="a" style="left:0px;top:37px;width:528px;height:1px;background:#d3dae2"></div>
<div class="a" style="left:0px;top:56px;width:528px;height:1px;background:#d3dae2"></div>
<div class="a" style="left:0px;top:75px;width:528px;height:1px;background:#d3dae2"></div>
<div class="a" style="left:0px;top:94px;width:528px;height:1px;background:#d3dae2"></div>
<div class="a" style="left:0px;top:113px;width:528px;height:1px;background:#d3dae2"></div>
<div class="a" style="left:0px;top:132px;width:528px;height:1px;background:#d3dae2"></div>
<div class="a" style="left:0px;top:151px;width:528px;height:1px;background:#d3dae2"></div>
<div class="a" style="left:0px;top:170px;width:528px;height:1px;background:#d3dae2"></div>
<div class="a" style="left:0px;top:189px;width:528px;height:1px;background:#d3dae2"></div>
<div class="a" style="left:0px;top:208px;width:528px;height:1px;background:#d3dae2"></div>
<div class="a" style="left:0px;top:227px;width:528px;height:1px;background:#d3dae2"></div>
<div class="a" style="left:0px;top:246px;width:528px;height:1px;background:#d3dae2"></div>
<div class="a" style="left:0px;top:265px;width:528px;height:1px;background:#d3dae2"></div>
<div class="a" style="left:0px;top:284px;width:528px;height:1px;background:#d3dae2"></div>
<div class="a" style="left:0px;top:303px;width:528px;height:1px;background:#d3dae2"></div>
<div class="a" style="left:0px;top:322px;width:528px;height:1px;background:#d3dae2"></div>
<div class="a" style="left:0px;top:341px;width:528px;height:1px;background:#d3dae2"></div>
<div class="a" style="left:0px;top:360px;width:528px;height:1px;background:#d3dae2"></div>
<div class="a" style="left:0px;top:379px;width:528px;height:1px;background:#d3dae2"></div>
<div class="a" style="left:0px;top:398px;width:528px;height:1px;background:#d3dae2"></div>
<div class="a" style="left:0px;top:417px;width:528px;height:1px;background:#d3dae2"></div>
<div class="a" style="left:0px;top:436px;width:528px;height:1px;background:#d3dae2"></div>
<div class="a" style="left:0px;top:455px;width:528px;height:1px;background:#d3dae2"></div>
<div class="a" style="left:0px;top:474px;width:528px;height:1px;background:#d3dae2"></div>
<div class="a" style="left:0px;top:493px;width:528px;height:1px;background:#d3dae2"></div>
<div class="a" style="left:0px;top:512px;width:528px;height:1px;background:#d3dae2"></div>
</div>
<div class="a" style="left:1115px;top:463px;width:528px;height:520px;overflow:hidden">
<div class="t" style="left:47px;top:6px;font-size:11px;line-height:11px;color:#111;">Выбранные поля</div>
<div class="a" style="left:21px;top:19px;width:1px;height:19px;background:#d3dae2"></div>
<div class="a" style="left:4px;top:22px;width:13px;height:13px;border:1px solid #9f9677;border-radius:3px;background:#fff;box-sizing:border-box"></div>
<svg class="a" style="left:6px;top:24px;" width="9" height="9" viewBox="0 0 9 9"><path d="M1.2 4.5L3.6 7.2L8 1.8" stroke="#222" stroke-width="2" fill="none"/></svg>
<div class="t" style="left:86px;top:25px;font-size:11px;line-height:11px;color:#111;">&lt;Авто&gt;</div>
<div class="a" style="left:21px;top:38px;width:1px;height:19px;background:#d3dae2"></div>
<div class="a" style="left:4px;top:41px;width:13px;height:13px;border:1px solid #9f9677;border-radius:3px;background:#fff;box-sizing:border-box"></div>
<svg class="a" style="left:6px;top:43px;" width="9" height="9" viewBox="0 0 9 9"><path d="M1.2 4.5L3.6 7.2L8 1.8" stroke="#222" stroke-width="2" fill="none"/></svg>
<div class="t" style="left:86px;top:44px;font-size:11px;line-height:11px;color:#111;">Гос. номер (ТС.ГосударственныйНомер)</div>
<div class="a" style="left:21px;top:57px;width:1px;height:19px;background:#d3dae2"></div>
<div class="a" style="left:4px;top:60px;width:13px;height:13px;border:1px solid #9f9677;border-radius:3px;background:#fff;box-sizing:border-box"></div>
<svg class="a" style="left:6px;top:62px;" width="9" height="9" viewBox="0 0 9 9"><path d="M1.2 4.5L3.6 7.2L8 1.8" stroke="#222" stroke-width="2" fill="none"/></svg>
<div class="t" style="left:86px;top:63px;font-size:11px;line-height:11px;color:#111;">ТС.НаименованиеМоделиКакВСТС</div>
<div class="a" style="left:21px;top:76px;width:1px;height:19px;background:#d3dae2"></div>
<div class="a" style="left:4px;top:79px;width:13px;height:13px;border:1px solid #9f9677;border-radius:3px;background:#fff;box-sizing:border-box"></div>
<svg class="a" style="left:6px;top:81px;" width="9" height="9" viewBox="0 0 9 9"><path d="M1.2 4.5L3.6 7.2L8 1.8" stroke="#222" stroke-width="2" fill="none"/></svg>
<div class="t" style="left:86px;top:82px;font-size:11px;line-height:11px;color:#111;">ТС.VIN</div>
<div class="a" style="left:21px;top:95px;width:1px;height:19px;background:#d3dae2"></div>
<div class="a" style="left:4px;top:98px;width:13px;height:13px;border:1px solid #9f9677;border-radius:3px;background:#fff;box-sizing:border-box"></div>
<svg class="a" style="left:6px;top:100px;" width="9" height="9" viewBox="0 0 9 9"><path d="M1.2 4.5L3.6 7.2L8 1.8" stroke="#222" stroke-width="2" fill="none"/></svg>
<div class="t" style="left:86px;top:101px;font-size:11px;line-height:11px;color:#111;">ТС.ГодВыпуска</div>
<div class="a" style="left:21px;top:114px;width:1px;height:19px;background:#d3dae2"></div>
<div class="a" style="left:4px;top:117px;width:13px;height:13px;border:1px solid #9f9677;border-radius:3px;background:#fff;box-sizing:border-box"></div>
<div class="t" style="left:86px;top:120px;font-size:11px;line-height:11px;color:#111;">ТС.ДатаВводаВЭксплуатацию</div>
<div class="a" style="left:21px;top:133px;width:1px;height:19px;background:#d3dae2"></div>
<div class="a" style="left:4px;top:136px;width:13px;height:13px;border:1px solid #9f9677;border-radius:3px;background:#fff;box-sizing:border-box"></div>
<svg class="a" style="left:6px;top:138px;" width="9" height="9" viewBox="0 0 9 9"><path d="M1.2 4.5L3.6 7.2L8 1.8" stroke="#222" stroke-width="2" fill="none"/></svg>
<div class="t" style="left:86px;top:139px;font-size:11px;line-height:11px;color:#111;">Тип трансмиссии (ТС.Модель.атТипТрансмиссии)</div>
<div class="a" style="left:21px;top:152px;width:1px;height:19px;background:#d3dae2"></div>
<div class="a" style="left:4px;top:155px;width:13px;height:13px;border:1px solid #9f9677;border-radius:3px;background:#fff;box-sizing:border-box"></div>
<svg class="a" style="left:6px;top:157px;" width="9" height="9" viewBox="0 0 9 9"><path d="M1.2 4.5L3.6 7.2L8 1.8" stroke="#222" stroke-width="2" fill="none"/></svg>
<div class="t" style="left:86px;top:158px;font-size:11px;line-height:11px;color:#111;">Объем двигателя (ТС.Модель.РабочийОбъемДвигателя)</div>
<div class="a" style="left:21px;top:171px;width:1px;height:19px;background:#d3dae2"></div>
<div class="a" style="left:4px;top:174px;width:13px;height:13px;border:1px solid #9f9677;border-radius:3px;background:#fff;box-sizing:border-box"></div>
<svg class="a" style="left:6px;top:176px;" width="9" height="9" viewBox="0 0 9 9"><path d="M1.2 4.5L3.6 7.2L8 1.8" stroke="#222" stroke-width="2" fill="none"/></svg>
<div class="t" style="left:86px;top:177px;font-size:11px;line-height:11px;color:#111;">Инв. номер (ТС.атИнвентарныйНомер)</div>
<div class="a" style="left:21px;top:190px;width:1px;height:19px;background:#d3dae2"></div>
<div class="a" style="left:4px;top:193px;width:13px;height:13px;border:1px solid #9f9677;border-radius:3px;background:#fff;box-sizing:border-box"></div>
<svg class="a" style="left:6px;top:195px;" width="9" height="9" viewBox="0 0 9 9"><path d="M1.2 4.5L3.6 7.2L8 1.8" stroke="#222" stroke-width="2" fill="none"/></svg>
<div class="t" style="left:86px;top:196px;font-size:11px;line-height:11px;color:#111;">Пробег, М/Ч</div>
<div class="a" style="left:21px;top:209px;width:1px;height:19px;background:#d3dae2"></div>
<div class="a" style="left:4px;top:212px;width:13px;height:13px;border:1px solid #9f9677;border-radius:3px;background:#fff;box-sizing:border-box"></div>
<svg class="a" style="left:6px;top:214px;" width="9" height="9" viewBox="0 0 9 9"><path d="M1.2 4.5L3.6 7.2L8 1.8" stroke="#222" stroke-width="2" fill="none"/></svg>
<div class="t" style="left:86px;top:215px;font-size:11px;line-height:11px;color:#111;">Логист</div>
<div class="a" style="left:21px;top:228px;width:1px;height:19px;background:#d3dae2"></div>
<div class="a" style="left:4px;top:231px;width:13px;height:13px;border:1px solid #9f9677;border-radius:3px;background:#fff;box-sizing:border-box"></div>
<svg class="a" style="left:6px;top:233px;" width="9" height="9" viewBox="0 0 9 9"><path d="M1.2 4.5L3.6 7.2L8 1.8" stroke="#222" stroke-width="2" fill="none"/></svg>
<div class="t" style="left:86px;top:234px;font-size:11px;line-height:11px;color:#111;">Не работает дней</div>
<div class="a" style="left:21px;top:247px;width:1px;height:19px;background:#d3dae2"></div>
<div class="a" style="left:4px;top:250px;width:13px;height:13px;border:1px solid #9f9677;border-radius:3px;background:#fff;box-sizing:border-box"></div>
<svg class="a" style="left:6px;top:252px;" width="9" height="9" viewBox="0 0 9 9"><path d="M1.2 4.5L3.6 7.2L8 1.8" stroke="#222" stroke-width="2" fill="none"/></svg>
<div class="t" style="left:86px;top:253px;font-size:11px;line-height:11px;color:#111;">Дата фото</div>
<div class="a" style="left:21px;top:266px;width:1px;height:19px;background:#d3dae2"></div>
<div class="a" style="left:4px;top:269px;width:13px;height:13px;border:1px solid #9f9677;border-radius:3px;background:#fff;box-sizing:border-box"></div>
<svg class="a" style="left:6px;top:271px;" width="9" height="9" viewBox="0 0 9 9"><path d="M1.2 4.5L3.6 7.2L8 1.8" stroke="#222" stroke-width="2" fill="none"/></svg>
<div class="t" style="left:86px;top:272px;font-size:11px;line-height:11px;color:#111;">Владение</div>
<div class="a" style="left:307px;top:267px;width:1px;height:18px;background:#e3e7ec"></div>
<div class="t" style="left:312px;top:272px;font-size:11px;line-height:11px;color:#111;">Авто</div>
<div class="a" style="left:21px;top:285px;width:1px;height:19px;background:#d3dae2"></div>
<div class="a" style="left:4px;top:288px;width:13px;height:13px;border:1px solid #9f9677;border-radius:3px;background:#fff;box-sizing:border-box"></div>
<svg class="a" style="left:6px;top:290px;" width="9" height="9" viewBox="0 0 9 9"><path d="M1.2 4.5L3.6 7.2L8 1.8" stroke="#222" stroke-width="2" fill="none"/></svg>
<div class="t" style="left:105px;top:291px;font-size:11px;line-height:11px;color:#111;">Тип владения</div>
<div class="a" style="left:21px;top:304px;width:1px;height:19px;background:#d3dae2"></div>
<div class="a" style="left:4px;top:307px;width:13px;height:13px;border:1px solid #9f9677;border-radius:3px;background:#fff;box-sizing:border-box"></div>
<svg class="a" style="left:6px;top:309px;" width="9" height="9" viewBox="0 0 9 9"><path d="M1.2 4.5L3.6 7.2L8 1.8" stroke="#222" stroke-width="2" fill="none"/></svg>
<div class="t" style="left:105px;top:310px;font-size:11px;line-height:11px;color:#111;">Начало</div>
<div class="a" style="left:21px;top:323px;width:1px;height:19px;background:#d3dae2"></div>
<div class="a" style="left:4px;top:326px;width:13px;height:13px;border:1px solid #9f9677;border-radius:3px;background:#fff;box-sizing:border-box"></div>
<svg class="a" style="left:6px;top:328px;" width="9" height="9" viewBox="0 0 9 9"><path d="M1.2 4.5L3.6 7.2L8 1.8" stroke="#222" stroke-width="2" fill="none"/></svg>
<div class="t" style="left:105px;top:329px;font-size:11px;line-height:11px;color:#111;">Владелец</div>
<div class="a" style="left:21px;top:342px;width:1px;height:19px;background:#d3dae2"></div>
<div class="a" style="left:4px;top:345px;width:13px;height:13px;border:1px solid #9f9677;border-radius:3px;background:#fff;box-sizing:border-box"></div>
<svg class="a" style="left:6px;top:347px;" width="9" height="9" viewBox="0 0 9 9"><path d="M1.2 4.5L3.6 7.2L8 1.8" stroke="#222" stroke-width="2" fill="none"/></svg>
<div class="t" style="left:105px;top:348px;font-size:11px;line-height:11px;color:#111;">Комментарий</div>
<div class="a" style="left:21px;top:361px;width:1px;height:19px;background:#d3dae2"></div>
<div class="a" style="left:4px;top:364px;width:13px;height:13px;border:1px solid #9f9677;border-radius:3px;background:#fff;box-sizing:border-box"></div>
<svg class="a" style="left:6px;top:366px;" width="9" height="9" viewBox="0 0 9 9"><path d="M1.2 4.5L3.6 7.2L8 1.8" stroke="#222" stroke-width="2" fill="none"/></svg>
<div class="t" style="left:86px;top:367px;font-size:11px;line-height:11px;color:#111;">Акт приема-передачи ТС</div>
<div class="a" style="left:307px;top:362px;width:1px;height:18px;background:#e3e7ec"></div>
<div class="t" style="left:312px;top:367px;font-size:11px;line-height:11px;color:#111;">Авто</div>
<div class="a" style="left:21px;top:380px;width:1px;height:19px;background:#d3dae2"></div>
<div class="a" style="left:4px;top:383px;width:13px;height:13px;border:1px solid #9f9677;border-radius:3px;background:#fff;box-sizing:border-box"></div>
<svg class="a" style="left:6px;top:385px;" width="9" height="9" viewBox="0 0 9 9"><path d="M1.2 4.5L3.6 7.2L8 1.8" stroke="#222" stroke-width="2" fill="none"/></svg>
<div class="t" style="left:105px;top:386px;font-size:11px;line-height:11px;color:#111;">Наименование</div>
<div class="a" style="left:21px;top:399px;width:1px;height:19px;background:#d3dae2"></div>
<div class="a" style="left:4px;top:402px;width:13px;height:13px;border:1px solid #9f9677;border-radius:3px;background:#fff;box-sizing:border-box"></div>
<svg class="a" style="left:6px;top:404px;" width="9" height="9" viewBox="0 0 9 9"><path d="M1.2 4.5L3.6 7.2L8 1.8" stroke="#222" stroke-width="2" fill="none"/></svg>
<div class="t" style="left:105px;top:405px;font-size:11px;line-height:11px;color:#111;">Файл</div>
<div class="a" style="left:21px;top:418px;width:1px;height:19px;background:#d3dae2"></div>
<div class="a" style="left:4px;top:421px;width:13px;height:13px;border:1px solid #9f9677;border-radius:3px;background:#fff;box-sizing:border-box"></div>
<svg class="a" style="left:6px;top:423px;" width="9" height="9" viewBox="0 0 9 9"><path d="M1.2 4.5L3.6 7.2L8 1.8" stroke="#222" stroke-width="2" fill="none"/></svg>
<div class="t" style="left:86px;top:424px;font-size:11px;line-height:11px;color:#111;">Договор купли-продажи ТС</div>
<div class="a" style="left:307px;top:419px;width:1px;height:18px;background:#e3e7ec"></div>
<div class="t" style="left:312px;top:424px;font-size:11px;line-height:11px;color:#111;">Авто</div>
<div class="a" style="left:21px;top:437px;width:1px;height:19px;background:#d3dae2"></div>
<div class="a" style="left:4px;top:440px;width:13px;height:13px;border:1px solid #9f9677;border-radius:3px;background:#fff;box-sizing:border-box"></div>
<svg class="a" style="left:6px;top:442px;" width="9" height="9" viewBox="0 0 9 9"><path d="M1.2 4.5L3.6 7.2L8 1.8" stroke="#222" stroke-width="2" fill="none"/></svg>
<div class="t" style="left:105px;top:443px;font-size:11px;line-height:11px;color:#111;">Договор купли продажи ТС</div>
<div class="a" style="left:21px;top:456px;width:1px;height:19px;background:#d3dae2"></div>
<div class="a" style="left:4px;top:459px;width:13px;height:13px;border:1px solid #9f9677;border-radius:3px;background:#fff;box-sizing:border-box"></div>
<svg class="a" style="left:6px;top:461px;" width="9" height="9" viewBox="0 0 9 9"><path d="M1.2 4.5L3.6 7.2L8 1.8" stroke="#222" stroke-width="2" fill="none"/></svg>
<div class="t" style="left:105px;top:462px;font-size:11px;line-height:11px;color:#111;">Файл</div>
<div class="a" style="left:21px;top:475px;width:1px;height:19px;background:#d3dae2"></div>
<div class="a" style="left:4px;top:478px;width:13px;height:13px;border:1px solid #9f9677;border-radius:3px;background:#fff;box-sizing:border-box"></div>
<svg class="a" style="left:6px;top:480px;" width="9" height="9" viewBox="0 0 9 9"><path d="M1.2 4.5L3.6 7.2L8 1.8" stroke="#222" stroke-width="2" fill="none"/></svg>
<div class="t" style="left:86px;top:481px;font-size:11px;line-height:11px;color:#111;">Обременение</div>
<div class="a" style="left:307px;top:476px;width:1px;height:18px;background:#e3e7ec"></div>
<div class="t" style="left:312px;top:481px;font-size:11px;line-height:11px;color:#111;">Авто</div>
<div class="a" style="left:21px;top:494px;width:1px;height:19px;background:#d3dae2"></div>
<div class="a" style="left:4px;top:497px;width:13px;height:13px;border:1px solid #9f9677;border-radius:3px;background:#fff;box-sizing:border-box"></div>
<svg class="a" style="left:6px;top:499px;" width="9" height="9" viewBox="0 0 9 9"><path d="M1.2 4.5L3.6 7.2L8 1.8" stroke="#222" stroke-width="2" fill="none"/></svg>
<div class="t" style="left:105px;top:500px;font-size:11px;line-height:11px;color:#111;">Начало</div>
<div class="a" style="left:21px;top:513px;width:1px;height:19px;background:#d3dae2"></div>
<div class="a" style="left:4px;top:516px;width:13px;height:13px;border:1px solid #9f9677;border-radius:3px;background:#fff;box-sizing:border-box"></div>
<svg class="a" style="left:6px;top:518px;" width="9" height="9" viewBox="0 0 9 9"><path d="M1.2 4.5L3.6 7.2L8 1.8" stroke="#222" stroke-width="2" fill="none"/></svg>
<div class="t" style="left:105px;top:519px;font-size:11px;line-height:11px;color:#111;">Комментарий</div>
</div>
<svg class="a" style="left:692px;top:1px;" width="16" height="16" viewBox="0 0 16 16"><defs><radialGradient id="g1c" cx="0.45" cy="0.3" r="0.75"><stop offset="0" stop-color="#fffce8"/><stop offset="0.55" stop-color="#f8dc60"/><stop offset="1" stop-color="#dca018"/></radialGradient></defs><circle cx="8" cy="8" r="7.5" fill="url(#g1c)" stroke="#e8b838" stroke-width="0.8"/><text x="2.2" y="11.2" font-family="Liberation Sans" font-weight="bold" font-size="8.5" fill="#e42414" letter-spacing="-0.6">1С</text></svg>
<svg class="a" style="left:1495px;top:2px;" width="12" height="14" viewBox="0 0 12 14"><path d="M0.5 0.5H8L11.5 4V13.5H0.5Z" fill="#dde6ee" stroke="#b8c8d8"/><path d="M6 3.5L7.2 6.2L10 6.4L7.9 8.2L8.6 11L6 9.5L3.4 11L4.1 8.2L2 6.4L4.8 6.2Z" fill="#d0cfc0" stroke="#b0aa98" stroke-width="0.5"/></svg>
<div class="a" style="left:1515px;top:2px;width:1px;height:16px;background:#a8a8a8"></div>
<svg class="a" style="left:1522px;top:1px;" width="13" height="15" viewBox="0 0 13 15"><rect x="0.5" y="0.5" width="12" height="14" rx="1" fill="#fbe8c8" stroke="#8a7a5a"/><rect x="2" y="2" width="9" height="2.2" fill="#40a040"/><g fill="#333"><rect x="2" y="5.5" width="2" height="1.4"/><rect x="5" y="5.5" width="2" height="1.4"/><rect x="8" y="5.5" width="2" height="1.4"/><rect x="2" y="8" width="2" height="1.4"/><rect x="5" y="8" width="2" height="1.4"/><rect x="8" y="8" width="2" height="1.4"/><rect x="2" y="10.5" width="2" height="1.4"/><rect x="5" y="10.5" width="2" height="1.4"/><rect x="8" y="10.5" width="2" height="1.4"/></g><rect x="9" y="5.5" width="1.4" height="1.4" fill="#e03020"/></svg>
<svg class="a" style="left:1545px;top:1px;" width="13" height="15" viewBox="0 0 13 15"><rect x="0.5" y="0.5" width="12" height="14" rx="1" fill="#fff6e8" stroke="#8a7a5a"/><rect x="1" y="1" width="11" height="3" fill="#f0c890"/><g fill="#555"><rect x="3" y="1.5" width="1" height="1"/><rect x="6" y="1.5" width="1" height="1"/><rect x="9" y="1.5" width="1" height="1"/></g><text x="6.5" y="13" text-anchor="middle" font-family="Liberation Sans" font-size="9.5" fill="#e03020">31</text></svg>
<div class="a" style="left:1566px;top:2px;width:1px;height:16px;background:#a8a8a8"></div>
<div class="t" style="left:1574px;top:4px;font-size:11px;line-height:11px;color:#b4a698;font-weight:700;">M</div>
<div class="t" style="left:1595px;top:4px;font-size:11px;line-height:11px;color:#b4a698;font-weight:700;">M+</div>
<div class="t" style="left:1618px;top:4px;font-size:11px;line-height:11px;color:#b4a698;font-weight:700;">M–</div>
<div class="a" style="left:1640px;top:2px;width:1px;height:16px;background:#a8a8a8"></div>
<div class="a" style="left:1648px;top:4px;width:11px;height:11px;border:1px solid #333;border-top:2px solid #333;box-sizing:border-box"></div>
<svg class="a" style="left:1670px;top:4px;" width="9" height="10" viewBox="0 0 9 10"><path d="M1 1L8 9M8 1L1 9" stroke="#333" stroke-width="2"/></svg>
<svg class="a" style="left:778px;top:58px;" width="17" height="16" viewBox="0 0 17 16"><rect x="0.5" y="0.5" width="6" height="6" fill="#e4eef8" stroke="#b8cce0"/><rect x="2" y="3" width="3" height="1" fill="#111"/><path d="M2.5 7V15.5H11M2.5 11.5H4.5" stroke="#6a6a6a" fill="none"/><rect x="4.5" y="8.5" width="6" height="6" fill="#e4eef8" stroke="#b8cce0"/><rect x="6" y="11" width="3" height="1" fill="#111"/><rect x="7" y="10" width="1" height="3" fill="#111"/><rect x="11.5" y="0.5" width="5" height="15" fill="#fff" stroke="#8aa8c8"/><rect x="12" y="1" width="4" height="2.5" fill="#5a9ad8"/><path d="M12 5.5h4M12 7.5h4M12 9.5h4M12 11.5h4M12 13.5h4" stroke="#a8bcd0"/></svg>
<svg class="a" style="left:808px;top:61px;" width="12" height="12" viewBox="0 0 12 12"><path d="M1.8 1.8L10.2 10.2M10.2 1.8L1.8 10.2" stroke="#d05848" stroke-width="3" stroke-linecap="round"/><path d="M1.8 1.8L10.2 10.2M10.2 1.8L1.8 10.2" stroke="#f08a78" stroke-width="1.4" stroke-linecap="round"/></svg>
<svg class="a" style="left:835px;top:60px;" width="13" height="12" viewBox="0 0 13 12"><path d="M6.5 0.7L12.3 6.5H9.2V11.5H3.8V6.5H0.7Z" fill="url(#gblue)" stroke="#2e6aa8" stroke-width="1" stroke-linejoin="round"/></svg>
<svg class="a" style="left:860px;top:60px;" width="13" height="12" viewBox="0 0 13 12"><path d="M6.5 11.3L12.3 5.5H9.2V0.5H3.8V5.5H0.7Z" fill="url(#gblue)" stroke="#2e6aa8" stroke-width="1" stroke-linejoin="round"/></svg>
<svg class="a" style="left:887px;top:58px;" width="17" height="16" viewBox="0 0 17 16"><path d="M0.5 11V0.5H9M5.5 0.5V8" stroke="url(#ggs)" fill="none"/><path d="M2.5 3h1v1h-1zM2.5 5h1v1h-1z" fill="#9898b8"/><path d="M9.5 9.5V14.5H15.5V9.5" fill="#eaf8fc" stroke="#23446c"/><use href="#gear" x="7" y="0" width="10" height="10"/><path d="M0.2 12.2H8M4.1 8.2V16" stroke="#2a9a18" stroke-width="2.4"/></svg>
<svg class="a" style="left:912px;top:58px;" width="17" height="16" viewBox="0 0 17 16"><path d="M0.5 13V0.5H9M5.5 0.5V8" stroke="url(#ggs)" fill="none"/><path d="M2.5 3h1v1h-1zM2.5 5h1v1h-1z" fill="#9898b8"/><path d="M9.5 9.5V14.5H15.5V9.5" fill="#eaf8fc" stroke="#23446c"/><use href="#gear" x="7" y="0" width="10" height="10"/><circle cx="5" cy="11" r="2.7" fill="#d0e4f8" stroke="#a87850" stroke-width="1.1"/><path d="M3 13L0.6 15.5" stroke="#a87850" stroke-width="1.6"/></svg>
<svg class="a" style="left:1548px;top:87px;" width="16" height="16"><use href="#ifields" width="16" height="16"/></svg>
<svg class="a" style="left:1548px;top:107px;" width="16" height="16"><use href="#ifields" width="16" height="16"/></svg>
<svg class="a" style="left:1573px;top:87px;" width="16" height="16"><use href="#ifilter" width="16" height="16"/></svg>
<svg class="a" style="left:1573px;top:107px;" width="16" height="16"><use href="#ifilter" width="16" height="16"/></svg>
<svg class="a" style="left:1598px;top:87px;" width="16" height="16"><use href="#isort" width="16" height="16"/></svg>
<svg class="a" style="left:1598px;top:107px;" width="16" height="16"><use href="#isort" width="16" height="16"/></svg>
<svg class="a" style="left:1623px;top:87px;" width="16" height="16"><use href="#ibrush" width="16" height="16"/></svg>
<svg class="a" style="left:1623px;top:107px;" width="16" height="16"><use href="#ibrush" width="16" height="16"/></svg>
<svg class="a" style="left:1648px;top:87px;" width="16" height="16"><use href="#igear" width="16" height="16"/></svg>
<svg class="a" style="left:1648px;top:107px;" width="16" height="16"><use href="#igear" width="16" height="16"/></svg>
<svg class="a" style="left:1548px;top:126px;" width="16" height="16"><use href="#ifields" width="16" height="16"/></svg>
<svg class="a" style="left:1648px;top:126px;" width="16" height="16"><use href="#igear" width="16" height="16"/></svg>
<svg class="a" style="left:712px;top:111px;" width="10" height="10"><use href="#minusc" width="10" height="10"/></svg>
<svg class="a" style="left:728px;top:107px;" width="16" height="17" viewBox="0 0 16 17"><path d="M4.5 3.5H11L14.5 7V16.5H4.5Z" fill="#fff" stroke="#7a98b4"/><path d="M0.5 0.5H8L11.5 4V13.5H0.5Z" fill="#f6f9fc" stroke="#7a98b4"/><path d="M2 3.5h5M2 5.5h8M2 7.5h8M2 9.5h8M2 11.5h8" stroke="#b4c4d4"/><path d="M8 0.5V4H11.5" fill="#dde8f2" stroke="#9ab0c6"/></svg>
<svg class="a" style="left:747px;top:128px;" width="13" height="13"><use href="#chk" width="13" height="13"/></svg>
<svg class="a" style="left:763px;top:131px;" width="14" height="6" viewBox="0 0 14 6"><rect x="0.5" y="0.5" width="13" height="5" fill="#3a4a5a"/><rect x="1.5" y="1.5" width="3" height="3" fill="#dfe8f0"/><rect x="5.5" y="1.5" width="3" height="3" fill="#dfe8f0"/><rect x="9.5" y="1.5" width="3" height="3" fill="#dfe8f0"/></svg>
<svg class="a" style="left:711px;top:371px;" width="16" height="16"><use href="#iparams" width="16" height="16"/></svg>
<svg class="a" style="left:814px;top:371px;" width="16" height="16"><use href="#ifx" width="16" height="16"/></svg>
<svg class="a" style="left:970px;top:371px;" width="16" height="16"><use href="#igrp" width="16" height="16"/></svg>
<svg class="a" style="left:1115px;top:370px;" width="16" height="16"><use href="#ifields" width="16" height="16"/></svg>
<svg class="a" style="left:1184px;top:371px;" width="16" height="16"><use href="#ifilter" width="16" height="16"/></svg>
<svg class="a" style="left:1260px;top:371px;" width="16" height="16"><use href="#isort" width="16" height="16"/></svg>
<svg class="a" style="left:1364px;top:371px;" width="16" height="16"><use href="#ibrush" width="16" height="16"/></svg>
<svg class="a" style="left:1518px;top:371px;" width="16" height="16"><use href="#igear" width="16" height="16"/></svg>
<svg class="a" style="left:1117px;top:416px;" width="16" height="16" viewBox="0 0 16 16"><defs><radialGradient id="ggr" cx="0.4" cy="0.35" r="0.7"><stop offset="0" stop-color="#d8f0c8"/><stop offset="1" stop-color="#4aa83a"/></radialGradient></defs><circle cx="8" cy="8" r="7.3" fill="url(#ggr)" stroke="#6a9a60" stroke-width="1"/><path d="M4 8H12M8 4V12" stroke="#fff" stroke-width="2.2"/></svg>
<svg class="a" style="left:1374px;top:419px;" width="12" height="11" viewBox="0 0 12 11"><path d="M2 1.5L10 9.5M10 1.5L2 9.5" stroke="#b8b0a8" stroke-width="2.6" stroke-linecap="round"/></svg>
<svg class="a" style="left:1401px;top:417px;" width="14" height="13" viewBox="0 0 14 13"><path d="M6.5 0.7L12.3 6.5H9.2V11.5H3.8V6.5H0.7Z" fill="url(#gblue)" stroke="#2e6aa8" stroke-width="1" stroke-linejoin="round"/></svg>
<svg class="a" style="left:1426px;top:417px;" width="14" height="13" viewBox="0 0 14 13"><path d="M6.5 11.3L12.3 5.5H9.2V0.5H3.8V5.5H0.7Z" fill="url(#gblue)" stroke="#2e6aa8" stroke-width="1" stroke-linejoin="round"/></svg>
<svg class="a" style="left:1452px;top:415px;" width="17" height="16" viewBox="0 0 17 16"><path d="M0.5 11V0.5H9M5.5 0.5V8" stroke="url(#ggs)" fill="none"/><path d="M2.5 3h1v1h-1zM2.5 5h1v1h-1z" fill="#9898b8"/><path d="M9.5 9.5V14.5H15.5V9.5" fill="#eaf8fc" stroke="#23446c"/><use href="#gear" x="7" y="0" width="10" height="10"/><path d="M0.2 12.2H8M4.1 8.2V16" stroke="#2a9a18" stroke-width="2.4"/></svg>
<svg class="a" style="left:721px;top:469px;" width="10" height="10"><use href="#plusc" width="10" height="10"/></svg>
<svg class="a" style="left:740px;top:472px;" width="10" height="4"><use href="#dash" width="10" height="4"/></svg>
<svg class="a" style="left:721px;top:488px;" width="10" height="10"><use href="#plusc" width="10" height="10"/></svg>
<svg class="a" style="left:740px;top:491px;" width="10" height="4"><use href="#dash" width="10" height="4"/></svg>
<svg class="a" style="left:721px;top:507px;" width="10" height="10"><use href="#plusc" width="10" height="10"/></svg>
<svg class="a" style="left:740px;top:510px;" width="10" height="4"><use href="#dash" width="10" height="4"/></svg>
<svg class="a" style="left:740px;top:529px;" width="10" height="4"><use href="#dash" width="10" height="4"/></svg>
<svg class="a" style="left:721px;top:545px;" width="10" height="10"><use href="#plusc" width="10" height="10"/></svg>
<svg class="a" style="left:740px;top:548px;" width="10" height="4"><use href="#dash" width="10" height="4"/></svg>
<svg class="a" style="left:721px;top:564px;" width="10" height="10"><use href="#plusc" width="10" height="10"/></svg>
<svg class="a" style="left:740px;top:567px;" width="10" height="4"><use href="#dash" width="10" height="4"/></svg>
<svg class="a" style="left:721px;top:583px;" width="10" height="10"><use href="#plusc" width="10" height="10"/></svg>
<svg class="a" style="left:740px;top:586px;" width="10" height="4"><use href="#dash" width="10" height="4"/></svg>
<svg class="a" style="left:721px;top:602px;" width="10" height="10"><use href="#plusc" width="10" height="10"/></svg>
<svg class="a" style="left:740px;top:605px;" width="10" height="4"><use href="#dash" width="10" height="4"/></svg>
<svg class="a" style="left:721px;top:621px;" width="10" height="10"><use href="#plusc" width="10" height="10"/></svg>
<svg class="a" style="left:740px;top:624px;" width="10" height="4"><use href="#dash" width="10" height="4"/></svg>
<svg class="a" style="left:721px;top:640px;" width="10" height="10"><use href="#plusc" width="10" height="10"/></svg>
<svg class="a" style="left:740px;top:643px;" width="10" height="4"><use href="#dash" width="10" height="4"/></svg>
<svg class="a" style="left:721px;top:659px;" width="10" height="10"><use href="#plusc" width="10" height="10"/></svg>
<svg class="a" style="left:740px;top:662px;" width="10" height="4"><use href="#dash" width="10" height="4"/></svg>
<svg class="a" style="left:721px;top:678px;" width="10" height="10"><use href="#plusc" width="10" height="10"/></svg>
<svg class="a" style="left:740px;top:681px;" width="10" height="4"><use href="#dash" width="10" height="4"/></svg>
<svg class="a" style="left:721px;top:697px;" width="10" height="10"><use href="#plusc" width="10" height="10"/></svg>
<svg class="a" style="left:740px;top:700px;" width="10" height="4"><use href="#dash" width="10" height="4"/></svg>
<svg class="a" style="left:740px;top:719px;" width="10" height="4"><use href="#dash" width="10" height="4"/></svg>
<svg class="a" style="left:721px;top:735px;" width="10" height="10"><use href="#plusc" width="10" height="10"/></svg>
<svg class="a" style="left:740px;top:738px;" width="10" height="4"><use href="#dash" width="10" height="4"/></svg>
<svg class="a" style="left:740px;top:757px;" width="10" height="4"><use href="#dash" width="10" height="4"/></svg>
<svg class="a" style="left:740px;top:776px;" width="10" height="4"><use href="#dash" width="10" height="4"/></svg>
<svg class="a" style="left:740px;top:795px;" width="10" height="4"><use href="#dash" width="10" height="4"/></svg>
<svg class="a" style="left:721px;top:811px;" width="10" height="10"><use href="#plusc" width="10" height="10"/></svg>
<svg class="a" style="left:740px;top:814px;" width="10" height="4"><use href="#dash" width="10" height="4"/></svg>
<svg class="a" style="left:721px;top:830px;" width="10" height="10"><use href="#plusc" width="10" height="10"/></svg>
<svg class="a" style="left:740px;top:833px;" width="10" height="4"><use href="#dash" width="10" height="4"/></svg>
<svg class="a" style="left:721px;top:849px;" width="10" height="10"><use href="#plusc" width="10" height="10"/></svg>
<svg class="a" style="left:740px;top:852px;" width="10" height="4"><use href="#dash" width="10" height="4"/></svg>
<svg class="a" style="left:740px;top:871px;" width="10" height="4"><use href="#dash" width="10" height="4"/></svg>
<svg class="a" style="left:721px;top:887px;" width="10" height="10"><use href="#plusc" width="10" height="10"/></svg>
<svg class="a" style="left:740px;top:890px;" width="10" height="4"><use href="#dash" width="10" height="4"/></svg>
<svg class="a" style="left:721px;top:906px;" width="10" height="10"><use href="#plusc" width="10" height="10"/></svg>
<svg class="a" style="left:740px;top:909px;" width="10" height="4"><use href="#dash" width="10" height="4"/></svg>
<svg class="a" style="left:740px;top:928px;" width="10" height="4"><use href="#dash" width="10" height="4"/></svg>
<svg class="a" style="left:740px;top:947px;" width="10" height="4"><use href="#dash" width="10" height="4"/></svg>
<svg class="a" style="left:721px;top:963px;" width="10" height="10"><use href="#plusc" width="10" height="10"/></svg>
<svg class="a" style="left:740px;top:966px;" width="10" height="4"><use href="#dash" width="10" height="4"/></svg>
<div class="a" style="left:714px;top:979px;width:375px;height:4px;overflow:hidden">
<svg class="a" style="left:7px;top:4px;" width="10" height="10"><use href="#plusc" width="10" height="10"/></svg>
</div>
<svg class="a" style="left:1093px;top:448px;" width="9" height="8" viewBox="0 0 9 8"><path d="M4.5 0.5L8.5 7.5H0.5Z" fill="#cfcfcf"/></svg>
<div class="a" style="left:1090px;top:962px;width:15px;height:1px;background:#b8ae88"></div>
<div class="a" style="left:1090px;top:963px;width:15px;height:20px;background:linear-gradient(90deg,#fdfcf4,#f4f0de 60%,#e8e2c6)"></div>
<svg class="a" style="left:1093px;top:970px;" width="9" height="7" viewBox="0 0 9 7"><defs><linearGradient id="gtri" x1="0" y1="0" x2="0" y2="1"><stop offset="0" stop-color="#404040"/><stop offset="1" stop-color="#b8b8b8"/></linearGradient></defs><path d="M0.5 0.5H8.5L4.5 7Z" fill="url(#gtri)"/></svg>
<svg class="a" style="left:1648px;top:448px;" width="9" height="8" viewBox="0 0 9 8"><path d="M4.5 0.5L8.5 7.5H0.5Z" fill="#cfcfcf"/></svg>
<div class="a" style="left:1644px;top:962px;width:16px;height:1px;background:#b8ae88"></div>
<div class="a" style="left:1644px;top:963px;width:16px;height:20px;background:linear-gradient(90deg,#fdfcf4,#f4f0de 60%,#e8e2c6)"></div>
<svg class="a" style="left:1648px;top:970px;" width="9" height="7" viewBox="0 0 9 7"><path d="M0.5 0.5H8.5L4.5 7Z" fill="url(#gtri)"/></svg>
<div class="a" style="left:1115px;top:463px;width:528px;height:520px;overflow:hidden">
<svg class="a" style="left:29px;top:6px;" width="10" height="10"><use href="#minusc" width="10" height="10"/></svg>
<svg class="a" style="left:67px;top:29px;" width="10" height="4"><use href="#dash" width="10" height="4"/></svg>
<svg class="a" style="left:72px;top:22px;" width="8" height="8" viewBox="0 0 8 8"><text x="0.5" y="7.5" font-family="Liberation Sans" font-weight="bold" font-size="9" fill="#7a4a20">A</text></svg>
<svg class="a" style="left:68px;top:46px;" width="8" height="8"><use href="#redx" width="8" height="8"/></svg>
<svg class="a" style="left:68px;top:65px;" width="8" height="8"><use href="#redx" width="8" height="8"/></svg>
<svg class="a" style="left:68px;top:84px;" width="8" height="8"><use href="#redx" width="8" height="8"/></svg>
<svg class="a" style="left:68px;top:103px;" width="8" height="8"><use href="#redx" width="8" height="8"/></svg>
<svg class="a" style="left:68px;top:122px;" width="8" height="8"><use href="#redx" width="8" height="8"/></svg>
<svg class="a" style="left:68px;top:141px;" width="8" height="8"><use href="#redx" width="8" height="8"/></svg>
<svg class="a" style="left:68px;top:160px;" width="8" height="8"><use href="#redx" width="8" height="8"/></svg>
<svg class="a" style="left:68px;top:179px;" width="8" height="8"><use href="#redx" width="8" height="8"/></svg>
<svg class="a" style="left:67px;top:199px;" width="10" height="4"><use href="#dash" width="10" height="4"/></svg>
<svg class="a" style="left:67px;top:218px;" width="10" height="4"><use href="#dash" width="10" height="4"/></svg>
<svg class="a" style="left:67px;top:237px;" width="10" height="4"><use href="#dash" width="10" height="4"/></svg>
<svg class="a" style="left:67px;top:256px;" width="10" height="4"><use href="#dash" width="10" height="4"/></svg>
<svg class="a" style="left:48px;top:272px;" width="10" height="10"><use href="#minusc" width="10" height="10"/></svg>
<svg class="a" style="left:67px;top:273px;" width="9" height="8"><use href="#folder" width="9" height="8"/></svg>
<svg class="a" style="left:86px;top:294px;" width="10" height="4"><use href="#dash" width="10" height="4"/></svg>
<svg class="a" style="left:86px;top:313px;" width="10" height="4"><use href="#dash" width="10" height="4"/></svg>
<svg class="a" style="left:86px;top:332px;" width="10" height="4"><use href="#dash" width="10" height="4"/></svg>
<svg class="a" style="left:86px;top:351px;" width="10" height="4"><use href="#dash" width="10" height="4"/></svg>
<svg class="a" style="left:48px;top:367px;" width="10" height="10"><use href="#minusc" width="10" height="10"/></svg>
<svg class="a" style="left:67px;top:368px;" width="9" height="8"><use href="#folder" width="9" height="8"/></svg>
<svg class="a" style="left:86px;top:389px;" width="10" height="4"><use href="#dash" width="10" height="4"/></svg>
<svg class="a" style="left:86px;top:408px;" width="10" height="4"><use href="#dash" width="10" height="4"/></svg>
<svg class="a" style="left:48px;top:424px;" width="10" height="10"><use href="#minusc" width="10" height="10"/></svg>
<svg class="a" style="left:67px;top:425px;" width="9" height="8"><use href="#folder" width="9" height="8"/></svg>
<svg class="a" style="left:86px;top:446px;" width="10" height="4"><use href="#dash" width="10" height="4"/></svg>
<svg class="a" style="left:86px;top:465px;" width="10" height="4"><use href="#dash" width="10" height="4"/></svg>
<svg class="a" style="left:48px;top:481px;" width="10" height="10"><use href="#minusc" width="10" height="10"/></svg>
<svg class="a" style="left:67px;top:482px;" width="9" height="8"><use href="#folder" width="9" height="8"/></svg>
<svg class="a" style="left:86px;top:503px;" width="10" height="4"><use href="#dash" width="10" height="4"/></svg>
<svg class="a" style="left:86px;top:522px;" width="10" height="4"><use href="#dash" width="10" height="4"/></svg>
</div>
<div class="a" style="left:0;top:0;width:686px;height:989px;overflow:hidden">
<svg class="a" style="left:-6px;top:52px;" width="17" height="16" viewBox="0 0 17 16"><g fill="#474747"><rect x="0" y="1" width="13" height="9"/><rect x="0" y="10" width="16" height="3"/><rect x="13" y="4" width="3" height="6"/><rect x="11" y="13" width="3" height="2.5"/></g><rect x="2" y="3" width="9" height="2.5" fill="#f4eed8"/><rect x="2" y="7" width="11" height="1.5" fill="#f4eed8"/><rect x="7" y="11" width="4" height="1.2" fill="#f4eed8"/></svg>
<svg class="a" style="left:92px;top:53px;" width="11" height="14" viewBox="0 0 11 14"><rect x="0" y="0" width="11" height="14" fill="#474747"/><rect x="2" y="2" width="7" height="2.5" fill="#f4eed8"/><g fill="#f4eed8"><rect x="2" y="6" width="1.4" height="1.4"/><rect x="4.8" y="6" width="1.4" height="1.4"/><rect x="7.6" y="6" width="1.4" height="1.4"/><rect x="2" y="8.5" width="1.4" height="1.4"/><rect x="4.8" y="8.5" width="1.4" height="1.4"/><rect x="7.6" y="8.5" width="1.4" height="1.4"/><rect x="2" y="11" width="1.4" height="1.4"/><rect x="4.8" y="11" width="1.4" height="1.4"/><rect x="7.6" y="11" width="1.4" height="1.4"/></g></svg>
<svg class="a" style="left:184px;top:53px;" width="15" height="15" viewBox="0 0 15 15"><g fill="#474747"><path d="M1 3L3 0.5H10V12H1Z"/><rect x="0" y="0" width="2.5" height="2"/><path d="M11.5 6Q14.2 9.5 14.2 11.5A2.7 2.7 0 0 1 8.8 11.5Q8.8 9.5 11.5 6Z"/></g><rect x="4.5" y="1.5" width="4" height="1.6" fill="#f4eed8"/><path d="M8.3 12.5L10.5 7.5" stroke="#f4eed8" stroke-width="1"/></svg>
<svg class="a" style="left:278px;top:53px;" width="15" height="15" viewBox="0 0 15 15"><circle cx="9.2" cy="5.8" r="5.6" fill="#474747"/><circle cx="12" cy="3" r="3.2" fill="#f4eed8"/><path d="M6 6.5L9 9.5L3.5 14.8L0.2 11.6Z" fill="#474747"/></svg>
<svg class="a" style="left:373px;top:53px;" width="14" height="14" viewBox="0 0 14 14"><g fill="#474747"><rect x="4" y="0" width="5" height="5"/><rect x="1" y="6" width="4.6" height="5"/><rect x="7" y="6" width="5" height="5"/><rect x="0" y="12" width="13.2" height="1.8"/></g></svg>
<svg class="a" style="left:466px;top:52px;" width="15" height="15" viewBox="0 0 15 15"><circle cx="9" cy="9" r="5.6" fill="#474747"/><circle cx="6" cy="6" r="6.2" fill="#f4eed8"/><circle cx="6" cy="6" r="5.3" fill="#474747"/><path d="M5 9.5V2.8H7.3A1.5 1.5 0 0 1 7.3 5.8H4M4 7.6H7" stroke="#f4eed8" stroke-width="1.1" fill="none"/></svg>
<svg class="a" style="left:560px;top:53px;" width="15" height="15" viewBox="0 0 15 15"><g fill="#474747"><ellipse cx="5" cy="3.5" rx="2.8" ry="3.4"/><path d="M3 6.5H7V9.5L6 14H1.5Q0 14 0.3 12.5Q1.5 10 3 9.5Z"/></g><rect x="7" y="6.5" width="7.5" height="8" rx="1.5" fill="#474747" stroke="#f4eed8" stroke-width="0.8"/><path d="M9.5 12.5V9H11.8A1 1 0 0 1 11.8 11.2H9.5" stroke="#f4eed8" stroke-width="1" fill="none"/></svg>
<svg class="a" style="left:654px;top:53px;" width="16" height="16" viewBox="0 0 16 16"><path d="M0.5 1.5H8.5V11.5H0.5Z" fill="none" stroke="#474747" stroke-width="1.2"/><rect x="2.5" y="0" width="4" height="2.5" rx="0.8" fill="none" stroke="#474747" stroke-width="1.1"/><path d="M2 4.5H6M2 6.5H5M2 8.5H5" stroke="#474747" stroke-width="1"/><circle cx="10" cy="9.5" r="5.5" fill="#474747"/><path d="M9 14V6H11A1.6 1.6 0 0 1 11 9.4H8M8 11.4H11" stroke="#f4eed8" stroke-width="1.1" fill="none"/></svg>
<svg class="a" style="left:5px;top:190px;" width="27" height="23" viewBox="0 0 27 23"><defs><linearGradient id="gwood" x1="0" y1="0" x2="0" y2="1"><stop offset="0" stop-color="#f2cfa8"/><stop offset="0.5" stop-color="#dca878"/><stop offset="1" stop-color="#b88050"/></linearGradient><linearGradient id="glight" x1="0" y1="0" x2="0" y2="1"><stop offset="0" stop-color="#ffe840"/><stop offset="1" stop-color="#fff8d8"/></linearGradient><linearGradient id="gshade" x1="0" y1="0" x2="1" y2="0"><stop offset="0" stop-color="#a8dcf8"/><stop offset="0.6" stop-color="#2a86c8"/><stop offset="1" stop-color="#105a98"/></linearGradient></defs><path d="M1.5 15L6.5 13.2H25L26 15.5L20 20.8L2.5 18.5Z" fill="url(#gwood)"/><path d="M9 8.5H17.5L19.5 14.5H6.5Z" fill="url(#glight)" opacity="0.9"/><ellipse cx="13.5" cy="15" rx="5" ry="1.3" fill="#fffef4"/><path d="M22 5.5V14.5" stroke="#d0d4dc" stroke-width="1.8"/><path d="M15 5.2H22" stroke="#d0d4dc" stroke-width="1.4"/><circle cx="22" cy="5.2" r="1.7" fill="#2a7ec0"/><path d="M8 9.8Q8.8 6 11.5 4.3V1.3H14.5V4.3Q17.3 6 18 9.8Q13 10.8 8 9.8Z" fill="url(#gshade)"/></svg>
<svg class="a" style="left:355px;top:267px;" width="8" height="5" viewBox="0 0 8 5"><path d="M0 0H8L4 4.5Z" fill="#4a3a10"/></svg>
<svg class="a" style="left:370px;top:263px;" width="11" height="12" viewBox="0 0 11 12"><g fill="none" stroke="#5a4a20" stroke-width="1"><rect x="1.5" y="1.5" width="8" height="9"/><path d="M1.5 4.5H9.5M1.5 7.5H9.5M4.5 1.5V10.5M7 1.5V10.5"/></g></svg>
<svg class="a" style="left:307px;top:314px;" width="9" height="11" viewBox="0 0 9 11"><rect x="0.5" y="0.5" width="8" height="10" fill="none" stroke="#5a4a20"/><rect x="2" y="2" width="5" height="2" fill="#5a4a20"/><g fill="#5a4a20"><rect x="2" y="5.5" width="1.3" height="1.3"/><rect x="4" y="5.5" width="1.3" height="1.3"/><rect x="6" y="5.5" width="1.3" height="1.3"/><rect x="2" y="7.8" width="1.3" height="1.3"/><rect x="4" y="7.8" width="1.3" height="1.3"/><rect x="6" y="7.8" width="1.3" height="1.3"/></g></svg>
<svg class="a" style="left:193px;top:337px;" width="17" height="17" viewBox="0 0 17 17"><path d="M0.5 2Q0.5 0.5 2 0.5H6L7.5 2H12.5Q13.5 2 13.5 3V11.5Q13.5 12.5 12.5 12.5H1.5Q0.5 12.5 0.5 11.5Z" fill="url(#gfold)" stroke="#c8a050"/><path d="M7.5 5.5H13L15.5 8V16.5H7.5Z" fill="#eef4fa" stroke="#8aa8c8"/><rect x="9" y="11" width="1.2" height="4" fill="#e03030"/><rect x="11" y="9.5" width="1.2" height="5.5" fill="#30a030"/><rect x="13" y="12" width="1.2" height="3" fill="#e0a030"/></svg>
<svg class="a" style="left:212px;top:346px;" width="6" height="4" viewBox="0 0 6 4"><path d="M0 0H6L3 3.5Z" fill="#4a3a10"/></svg>
<svg class="a" style="left:281px;top:338px;" width="17" height="16" viewBox="0 0 17 16"><rect x="3" y="0" width="1" height="12" fill="#f07840"/><path d="M1 11H6L3.5 14.5Z" fill="#f07840"/><g fill="#2a2a2a"><rect x="7" y="2" width="1" height="1"/><rect x="9" y="2" width="7" height="1"/><rect x="9" y="4" width="7" height="1"/><rect x="7" y="8" width="1" height="1"/><rect x="9" y="8" width="7" height="1"/></g><g fill="#9a9a9a"><rect x="9" y="6" width="7" height="1"/><rect x="9" y="10" width="7" height="1"/><rect x="9" y="12" width="7" height="1"/><rect x="9" y="14" width="7" height="1"/><rect x="7" y="12" width="1" height="1"/></g></svg>
<svg class="a" style="left:306px;top:338px;" width="17" height="16" viewBox="0 0 17 16"><rect x="3" y="3" width="1" height="12" fill="#f07840"/><path d="M1 4H6L3.5 0.5Z" fill="#f07840"/><g fill="#2a2a2a"><rect x="7" y="2" width="1" height="1"/><rect x="9" y="2" width="7" height="1"/><rect x="9" y="4" width="7" height="1"/><rect x="7" y="6" width="1" height="1"/><rect x="9" y="6" width="7" height="1"/></g></svg>
<svg class="a" style="left:336px;top:339px;" width="15" height="14" viewBox="0 0 15 14"><rect x="4" y="0.5" width="7" height="5" fill="#eef4fa" stroke="#7a9ab8"/><rect x="0.5" y="3.5" width="14" height="7.5" rx="2" fill="#f6f0ea" stroke="#808080"/><path d="M1 7H14" stroke="#c0a088" stroke-width="0.8"/><rect x="4" y="8.5" width="7" height="2.5" fill="#151515"/><rect x="3.5" y="11" width="8" height="2.5" fill="#fff" stroke="#888" stroke-width="0.8"/><circle cx="9" cy="7" r="0.8" fill="#e02020"/><circle cx="11" cy="7" r="0.8" fill="#20a020"/></svg>
<svg class="a" style="left:360px;top:338px;" width="16" height="16" viewBox="0 0 16 16"><path d="M0.5 0.5H8.5L11.5 3.5V13.5H0.5Z" fill="#f4f8fc" stroke="#6a8aa8"/><circle cx="9" cy="9.5" r="2.8" fill="#c8dcf4" stroke="#8a5a30" stroke-width="1"/><path d="M11 11.5L14.5 15" stroke="#8a5a30" stroke-width="2"/></svg>
<svg class="a" style="left:385px;top:338px;" width="15" height="15" viewBox="0 0 15 15"><rect x="0.5" y="0.5" width="14" height="14" rx="1.5" fill="#bcd6ea" stroke="#6a8aa6"/><rect x="3" y="1" width="9" height="5.5" fill="#f4fafc" stroke="#a8c4d8" stroke-width="0.6"/><path d="M4 3.2H11M4 4.8H11" stroke="#a8d0e0" stroke-width="0.8"/><rect x="3.5" y="9" width="8" height="5" fill="#f2f2f2" stroke="#7a94ac" stroke-width="0.6"/><rect x="5" y="10" width="2" height="3" fill="#3a5a78"/></svg>
<svg class="a" style="left:531px;top:346px;" width="6" height="4" viewBox="0 0 6 4"><path d="M0 0H6L3 3.5Z" fill="#333"/></svg>
</div>
</body></html>
